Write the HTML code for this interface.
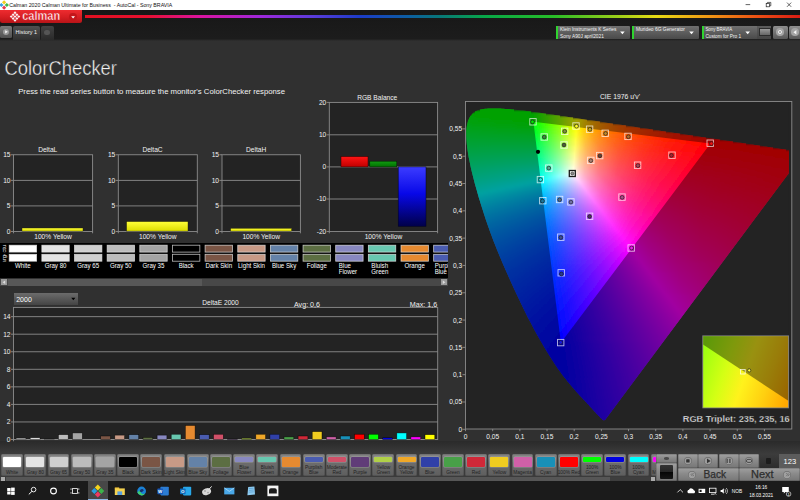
<!DOCTYPE html>
<html lang="en"><head><meta charset="utf-8"><title>Calman 2020 Calman Ultimate for Business - AutoCal - Sony BRAVIA</title>
<style>
html,body{margin:0;padding:0}
body{width:800px;height:500px;overflow:hidden;background:#303030;font-family:"Liberation Sans",sans-serif;position:relative;color:#fff}
.a{position:absolute}
.t{position:absolute;white-space:nowrap;line-height:1}
svg{position:absolute;left:0;top:0}
svg text{font-family:"Liberation Sans",sans-serif}
</style></head><body>
<div class="a" style="left:0.0px;top:0.0px;width:800.0px;height:10.1px;background:#fff;"></div>
<div class="a" style="left:0.0px;top:10.1px;width:800.0px;height:30.6px;background:linear-gradient(#161616,#1a1a1a 50%,#1c1c1c 93%,#303030);"></div>
<div class="a" style="left:0.0px;top:10.1px;width:82.0px;height:13.4px;background:linear-gradient(#ee2c30,#d61e22 55%,#b81418);border-radius:0 0 2.5px 2.5px"></div>
<div class="a" style="left:69.4px;top:13.2px;width:7.4px;height:7.4px;background:#c4161a;border-radius:50%"></div>
<div class="a" style="left:85px;top:15.2px;width:715px;height:2.4px;background:linear-gradient(90deg,#e01020 0%,#e81030 8.7%,#dc14a0 16%,#a028dc 24.5%,#5a3cdc 32%,#1c3cc8 38.5%,#0c60a0 45.5%,#087878 49.7%,#08a848 56%,#28be28 65.5%,#a0d018 74.8%,#e8dc14 79.9%,#f09614 87.4%,#ec4c14 94.4%,#dc1c14 100%);filter:blur(0.35px)"></div>
<div class="a" style="left:0.0px;top:25.5px;width:12.0px;height:12.6px;background:linear-gradient(#7a7a7a,#505050);border-radius:1.5px"></div>
<div class="a" style="left:2.8px;top:28.6px;width:6.4px;height:6.4px;background:#9a9a9a;border-radius:50%"></div>
<div class="a" style="left:13.0px;top:25.5px;width:27.2px;height:14.0px;background:linear-gradient(#505050,#303030);border-radius:2px 2px 0 0"></div>
<div class="a" style="left:40.6px;top:25.5px;width:13.2px;height:14.0px;background:linear-gradient(#424242,#2a2a2a);border-radius:2px 2px 0 0"></div>
<div class="a" style="left:44.4px;top:30.0px;width:5.4px;height:5.4px;background:#555;border-radius:50%"></div>
<div class="a" style="left:556.2px;top:25.7px;width:73.5px;height:13.0px;background:linear-gradient(#707070,#4a4a4a);border-radius:1px"></div>
<div class="a" style="left:556.2px;top:25.7px;width:2.2px;height:13.0px;background:#2fd32f;"></div>
<div class="a" style="left:632.0px;top:25.7px;width:66.5px;height:13.0px;background:linear-gradient(#707070,#4a4a4a);border-radius:1px"></div>
<div class="a" style="left:632.0px;top:25.7px;width:2.2px;height:13.0px;background:#2fd32f;"></div>
<div class="a" style="left:701.5px;top:25.7px;width:69.5px;height:13.0px;background:linear-gradient(#707070,#4a4a4a);border-radius:1px"></div>
<div class="a" style="left:701.5px;top:25.7px;width:2.2px;height:13.0px;background:#2fd32f;"></div>
<div class="a" style="left:757.0px;top:25.7px;width:14.0px;height:13.0px;background:linear-gradient(#5c5c5c,#454545);"></div>
<div class="a" style="left:759.4px;top:28.4px;width:9.4px;height:6.0px;background:linear-gradient(#9a9a9a,#666);border:0.5px solid #2c2c2c"></div>
<div class="a" style="left:773.0px;top:25.7px;width:14.6px;height:13.0px;background:linear-gradient(#8e8e8e,#585858);border-radius:1.5px"></div>
<div class="a" style="left:776.4px;top:28.4px;width:7.6px;height:7.6px;background:#a4a4a4;border-radius:50%"></div>
<div class="a" style="left:778.4px;top:30.4px;width:1.6px;height:1.6px;background:transparent;border:1.1px solid #f4f4f4;border-radius:50%"></div>
<div class="a" style="left:789.0px;top:25.7px;width:12.0px;height:13.0px;background:linear-gradient(#8e8e8e,#585858);border-radius:1.5px"></div>
<div class="a" style="left:791.0px;top:28.4px;width:7.6px;height:7.6px;background:#a4a4a4;border-radius:50%"></div>
<div class="a" style="left:0.0px;top:243.2px;width:448.0px;height:34.5px;background:#000;"></div>
<div class="a" style="left:0.0px;top:278.8px;width:448.0px;height:7.0px;background:#484848;"></div>
<div class="a" style="left:8.0px;top:278.8px;width:194.0px;height:7.0px;background:#585858;"></div>
<div class="a" style="left:1.0px;top:279.4px;width:6.0px;height:5.8px;background:#9a9a9a;"></div>
<div class="a" style="left:440.6px;top:279.4px;width:6.6px;height:5.8px;background:#9a9a9a;"></div>
<div class="a" style="left:14.0px;top:293.4px;width:64.0px;height:11.3px;background:linear-gradient(#6c6c6c,#444);"></div>
<div class="a" style="left:0.0px;top:441.0px;width:800.0px;height:41.0px;background:linear-gradient(#2a2a2a,#3b3b3b 30%,#3b3b3b);"></div>
<div class="a" style="left:0;top:454.4px;width:655.6px;height:22px;overflow:hidden">
<div class="a" style="left:1.2px;top:0;width:21.8px;height:21.6px;background:linear-gradient(#858585,#6c6c6c 40%,#5e5e5e);border-radius:1.5px;box-shadow:inset 0 0 0 0.5px rgba(0,0,0,.25)"></div>
<div class="a" style="left:3.1px;top:2.5px;width:18px;height:10.2px;background:#ffffff;border-radius:1px;box-shadow:0 0 0 0.6px rgba(255,255,255,.3)"></div>
<div class="a" style="left:24.4px;top:0;width:21.8px;height:21.6px;background:linear-gradient(#858585,#6c6c6c 40%,#5e5e5e);border-radius:1.5px;box-shadow:inset 0 0 0 0.5px rgba(0,0,0,.25)"></div>
<div class="a" style="left:26.3px;top:2.5px;width:18px;height:10.2px;background:#e4e4e4;border-radius:1px;box-shadow:0 0 0 0.6px rgba(255,255,255,.3)"></div>
<div class="a" style="left:47.6px;top:0;width:21.8px;height:21.6px;background:linear-gradient(#858585,#6c6c6c 40%,#5e5e5e);border-radius:1.5px;box-shadow:inset 0 0 0 0.5px rgba(0,0,0,.25)"></div>
<div class="a" style="left:49.5px;top:2.5px;width:18px;height:10.2px;background:#d0d0d0;border-radius:1px;box-shadow:0 0 0 0.6px rgba(255,255,255,.3)"></div>
<div class="a" style="left:70.8px;top:0;width:21.8px;height:21.6px;background:linear-gradient(#858585,#6c6c6c 40%,#5e5e5e);border-radius:1.5px;box-shadow:inset 0 0 0 0.5px rgba(0,0,0,.25)"></div>
<div class="a" style="left:72.7px;top:2.5px;width:18px;height:10.2px;background:#bcbcbc;border-radius:1px;box-shadow:0 0 0 0.6px rgba(255,255,255,.3)"></div>
<div class="a" style="left:94.0px;top:0;width:21.8px;height:21.6px;background:linear-gradient(#858585,#6c6c6c 40%,#5e5e5e);border-radius:1.5px;box-shadow:inset 0 0 0 0.5px rgba(0,0,0,.25)"></div>
<div class="a" style="left:95.9px;top:2.5px;width:18px;height:10.2px;background:#a4a4a4;border-radius:1px;box-shadow:0 0 0 0.6px rgba(255,255,255,.3)"></div>
<div class="a" style="left:117.2px;top:0;width:21.8px;height:21.6px;background:linear-gradient(#858585,#6c6c6c 40%,#5e5e5e);border-radius:1.5px;box-shadow:inset 0 0 0 0.5px rgba(0,0,0,.25)"></div>
<div class="a" style="left:119.1px;top:2.5px;width:18px;height:10.2px;background:#000000;border-radius:1px;box-shadow:0 0 0 0.6px rgba(255,255,255,.3)"></div>
<div class="a" style="left:140.4px;top:0;width:21.8px;height:21.6px;background:linear-gradient(#858585,#6c6c6c 40%,#5e5e5e);border-radius:1.5px;box-shadow:inset 0 0 0 0.5px rgba(0,0,0,.25)"></div>
<div class="a" style="left:142.3px;top:2.5px;width:18px;height:10.2px;background:#7a5545;border-radius:1px;box-shadow:0 0 0 0.6px rgba(255,255,255,.3)"></div>
<div class="a" style="left:163.6px;top:0;width:21.8px;height:21.6px;background:linear-gradient(#858585,#6c6c6c 40%,#5e5e5e);border-radius:1.5px;box-shadow:inset 0 0 0 0.5px rgba(0,0,0,.25)"></div>
<div class="a" style="left:165.5px;top:2.5px;width:18px;height:10.2px;background:#c89a86;border-radius:1px;box-shadow:0 0 0 0.6px rgba(255,255,255,.3)"></div>
<div class="a" style="left:186.8px;top:0;width:21.8px;height:21.6px;background:linear-gradient(#858585,#6c6c6c 40%,#5e5e5e);border-radius:1.5px;box-shadow:inset 0 0 0 0.5px rgba(0,0,0,.25)"></div>
<div class="a" style="left:188.7px;top:2.5px;width:18px;height:10.2px;background:#6482a8;border-radius:1px;box-shadow:0 0 0 0.6px rgba(255,255,255,.3)"></div>
<div class="a" style="left:210.0px;top:0;width:21.8px;height:21.6px;background:linear-gradient(#858585,#6c6c6c 40%,#5e5e5e);border-radius:1.5px;box-shadow:inset 0 0 0 0.5px rgba(0,0,0,.25)"></div>
<div class="a" style="left:211.9px;top:2.5px;width:18px;height:10.2px;background:#5c6e42;border-radius:1px;box-shadow:0 0 0 0.6px rgba(255,255,255,.3)"></div>
<div class="a" style="left:233.2px;top:0;width:21.8px;height:21.6px;background:linear-gradient(#858585,#6c6c6c 40%,#5e5e5e);border-radius:1.5px;box-shadow:inset 0 0 0 0.5px rgba(0,0,0,.25)"></div>
<div class="a" style="left:235.1px;top:2.5px;width:18px;height:5.2px;background:#8888c0;border-radius:1px;box-shadow:0 0 0 0.6px rgba(255,255,255,.3)"></div>
<div class="a" style="left:256.4px;top:0;width:21.8px;height:21.6px;background:linear-gradient(#858585,#6c6c6c 40%,#5e5e5e);border-radius:1.5px;box-shadow:inset 0 0 0 0.5px rgba(0,0,0,.25)"></div>
<div class="a" style="left:258.3px;top:2.5px;width:18px;height:5.2px;background:#68c8b0;border-radius:1px;box-shadow:0 0 0 0.6px rgba(255,255,255,.3)"></div>
<div class="a" style="left:279.6px;top:0;width:21.8px;height:21.6px;background:linear-gradient(#858585,#6c6c6c 40%,#5e5e5e);border-radius:1.5px;box-shadow:inset 0 0 0 0.5px rgba(0,0,0,.25)"></div>
<div class="a" style="left:281.5px;top:2.5px;width:18px;height:10.2px;background:#e68a30;border-radius:1px;box-shadow:0 0 0 0.6px rgba(255,255,255,.3)"></div>
<div class="a" style="left:302.8px;top:0;width:21.8px;height:21.6px;background:linear-gradient(#858585,#6c6c6c 40%,#5e5e5e);border-radius:1.5px;box-shadow:inset 0 0 0 0.5px rgba(0,0,0,.25)"></div>
<div class="a" style="left:304.7px;top:2.5px;width:18px;height:5.2px;background:#4a5cb0;border-radius:1px;box-shadow:0 0 0 0.6px rgba(255,255,255,.3)"></div>
<div class="a" style="left:326.0px;top:0;width:21.8px;height:21.6px;background:linear-gradient(#858585,#6c6c6c 40%,#5e5e5e);border-radius:1.5px;box-shadow:inset 0 0 0 0.5px rgba(0,0,0,.25)"></div>
<div class="a" style="left:327.9px;top:2.5px;width:18px;height:5.2px;background:#d05068;border-radius:1px;box-shadow:0 0 0 0.6px rgba(255,255,255,.3)"></div>
<div class="a" style="left:349.2px;top:0;width:21.8px;height:21.6px;background:linear-gradient(#858585,#6c6c6c 40%,#5e5e5e);border-radius:1.5px;box-shadow:inset 0 0 0 0.5px rgba(0,0,0,.25)"></div>
<div class="a" style="left:351.1px;top:2.5px;width:18px;height:10.2px;background:#603c78;border-radius:1px;box-shadow:0 0 0 0.6px rgba(255,255,255,.3)"></div>
<div class="a" style="left:372.4px;top:0;width:21.8px;height:21.6px;background:linear-gradient(#858585,#6c6c6c 40%,#5e5e5e);border-radius:1.5px;box-shadow:inset 0 0 0 0.5px rgba(0,0,0,.25)"></div>
<div class="a" style="left:374.3px;top:2.5px;width:18px;height:5.2px;background:#b0d048;border-radius:1px;box-shadow:0 0 0 0.6px rgba(255,255,255,.3)"></div>
<div class="a" style="left:395.6px;top:0;width:21.8px;height:21.6px;background:linear-gradient(#858585,#6c6c6c 40%,#5e5e5e);border-radius:1.5px;box-shadow:inset 0 0 0 0.5px rgba(0,0,0,.25)"></div>
<div class="a" style="left:397.5px;top:2.5px;width:18px;height:5.2px;background:#f0a828;border-radius:1px;box-shadow:0 0 0 0.6px rgba(255,255,255,.3)"></div>
<div class="a" style="left:418.8px;top:0;width:21.8px;height:21.6px;background:linear-gradient(#858585,#6c6c6c 40%,#5e5e5e);border-radius:1.5px;box-shadow:inset 0 0 0 0.5px rgba(0,0,0,.25)"></div>
<div class="a" style="left:420.7px;top:2.5px;width:18px;height:10.2px;background:#3040a8;border-radius:1px;box-shadow:0 0 0 0.6px rgba(255,255,255,.3)"></div>
<div class="a" style="left:442.0px;top:0;width:21.8px;height:21.6px;background:linear-gradient(#858585,#6c6c6c 40%,#5e5e5e);border-radius:1.5px;box-shadow:inset 0 0 0 0.5px rgba(0,0,0,.25)"></div>
<div class="a" style="left:443.9px;top:2.5px;width:18px;height:10.2px;background:#48a048;border-radius:1px;box-shadow:0 0 0 0.6px rgba(255,255,255,.3)"></div>
<div class="a" style="left:465.2px;top:0;width:21.8px;height:21.6px;background:linear-gradient(#858585,#6c6c6c 40%,#5e5e5e);border-radius:1.5px;box-shadow:inset 0 0 0 0.5px rgba(0,0,0,.25)"></div>
<div class="a" style="left:467.1px;top:2.5px;width:18px;height:10.2px;background:#d02838;border-radius:1px;box-shadow:0 0 0 0.6px rgba(255,255,255,.3)"></div>
<div class="a" style="left:488.4px;top:0;width:21.8px;height:21.6px;background:linear-gradient(#858585,#6c6c6c 40%,#5e5e5e);border-radius:1.5px;box-shadow:inset 0 0 0 0.5px rgba(0,0,0,.25)"></div>
<div class="a" style="left:490.3px;top:2.5px;width:18px;height:10.2px;background:#f0cc20;border-radius:1px;box-shadow:0 0 0 0.6px rgba(255,255,255,.3)"></div>
<div class="a" style="left:511.6px;top:0;width:21.8px;height:21.6px;background:linear-gradient(#858585,#6c6c6c 40%,#5e5e5e);border-radius:1.5px;box-shadow:inset 0 0 0 0.5px rgba(0,0,0,.25)"></div>
<div class="a" style="left:513.5px;top:2.5px;width:18px;height:10.2px;background:#d060a8;border-radius:1px;box-shadow:0 0 0 0.6px rgba(255,255,255,.3)"></div>
<div class="a" style="left:534.8px;top:0;width:21.8px;height:21.6px;background:linear-gradient(#858585,#6c6c6c 40%,#5e5e5e);border-radius:1.5px;box-shadow:inset 0 0 0 0.5px rgba(0,0,0,.25)"></div>
<div class="a" style="left:536.7px;top:2.5px;width:18px;height:10.2px;background:#1890b8;border-radius:1px;box-shadow:0 0 0 0.6px rgba(255,255,255,.3)"></div>
<div class="a" style="left:558.0px;top:0;width:21.8px;height:21.6px;background:linear-gradient(#858585,#6c6c6c 40%,#5e5e5e);border-radius:1.5px;box-shadow:inset 0 0 0 0.5px rgba(0,0,0,.25)"></div>
<div class="a" style="left:559.9px;top:2.5px;width:18px;height:10.2px;background:#ff0000;border-radius:1px;box-shadow:0 0 0 0.6px rgba(255,255,255,.3)"></div>
<div class="a" style="left:581.2px;top:0;width:21.8px;height:21.6px;background:linear-gradient(#858585,#6c6c6c 40%,#5e5e5e);border-radius:1.5px;box-shadow:inset 0 0 0 0.5px rgba(0,0,0,.25)"></div>
<div class="a" style="left:583.1px;top:2.5px;width:18px;height:5.2px;background:#00ff00;border-radius:1px;box-shadow:0 0 0 0.6px rgba(255,255,255,.3)"></div>
<div class="a" style="left:604.4px;top:0;width:21.8px;height:21.6px;background:linear-gradient(#858585,#6c6c6c 40%,#5e5e5e);border-radius:1.5px;box-shadow:inset 0 0 0 0.5px rgba(0,0,0,.25)"></div>
<div class="a" style="left:606.3px;top:2.5px;width:18px;height:5.2px;background:#0000e0;border-radius:1px;box-shadow:0 0 0 0.6px rgba(255,255,255,.3)"></div>
<div class="a" style="left:627.6px;top:0;width:21.8px;height:21.6px;background:linear-gradient(#858585,#6c6c6c 40%,#5e5e5e);border-radius:1.5px;box-shadow:inset 0 0 0 0.5px rgba(0,0,0,.25)"></div>
<div class="a" style="left:629.5px;top:2.5px;width:18px;height:5.2px;background:#00ffff;border-radius:1px;box-shadow:0 0 0 0.6px rgba(255,255,255,.3)"></div>
<div class="a" style="left:650.8px;top:0;width:21.8px;height:21.6px;background:linear-gradient(#858585,#6c6c6c 40%,#5e5e5e);border-radius:1.5px;box-shadow:inset 0 0 0 0.5px rgba(0,0,0,.25)"></div>
<div class="a" style="left:652.7px;top:2.5px;width:18px;height:5.2px;background:#ff00ff;border-radius:1px;box-shadow:0 0 0 0.6px rgba(255,255,255,.3)"></div>
<div class="a" style="left:674.0px;top:0;width:21.8px;height:21.6px;background:linear-gradient(#858585,#6c6c6c 40%,#5e5e5e);border-radius:1.5px;box-shadow:inset 0 0 0 0.5px rgba(0,0,0,.25)"></div>
<div class="a" style="left:675.9px;top:2.5px;width:18px;height:5.2px;background:#ffff00;border-radius:1px;box-shadow:0 0 0 0.6px rgba(255,255,255,.3)"></div>
</div>
<div class="a" style="left:0.0px;top:476.6px;width:655.6px;height:4.7px;background:#3e3e3e;"></div>
<div class="a" style="left:6.0px;top:476.6px;width:604.0px;height:4.7px;background:#565656;"></div>
<div class="a" style="left:1.0px;top:477.2px;width:4.4px;height:3.6px;background:#aaa;"></div>
<div class="a" style="left:650.6px;top:477.2px;width:4.4px;height:3.6px;background:#aaa;"></div>
<div class="a" style="left:656.0px;top:454.4px;width:21.2px;height:8.2px;background:linear-gradient(#a0a0a0,#8a8a8a 45%,#767676);border-radius:1px;box-shadow:inset 0 0 0 0.5px rgba(0,0,0,.3)"></div>
<div class="a" style="left:656.0px;top:463.0px;width:21.2px;height:18.3px;background:linear-gradient(#a0a0a0,#8a8a8a 45%,#767676);border-radius:1px;box-shadow:inset 0 0 0 0.5px rgba(0,0,0,.3)"></div>
<div class="a" style="left:659.8px;top:465.0px;width:13.6px;height:14.0px;background:linear-gradient(#333,#262626 48%,#060606 52%,#161616);border-radius:1px"></div>
<div class="a" style="left:663.6px;top:456.6px;width:5.6px;height:3.0px;background:#4a4a4a;border-radius:50%"></div>
<div class="a" style="left:678.0px;top:454.4px;width:19.9px;height:13.3px;background:linear-gradient(#a0a0a0,#8a8a8a 45%,#767676);border-radius:1px;box-shadow:inset 0 0 0 0.5px rgba(0,0,0,.3)"></div>
<div class="a" style="left:683.7px;top:456.8px;width:8.4px;height:8.4px;background:#9c9c9c;border-radius:50%;box-shadow:inset 0 0 0 0.7px #6a6a6a"></div>
<div class="a" style="left:698.4px;top:454.4px;width:19.9px;height:13.3px;background:linear-gradient(#a0a0a0,#8a8a8a 45%,#767676);border-radius:1px;box-shadow:inset 0 0 0 0.5px rgba(0,0,0,.3)"></div>
<div class="a" style="left:704.1px;top:456.8px;width:8.4px;height:8.4px;background:#9c9c9c;border-radius:50%;box-shadow:inset 0 0 0 0.7px #6a6a6a"></div>
<div class="a" style="left:718.8px;top:454.4px;width:19.9px;height:13.3px;background:linear-gradient(#a0a0a0,#8a8a8a 45%,#767676);border-radius:1px;box-shadow:inset 0 0 0 0.5px rgba(0,0,0,.3)"></div>
<div class="a" style="left:724.5px;top:456.8px;width:8.4px;height:8.4px;background:#9c9c9c;border-radius:50%;box-shadow:inset 0 0 0 0.7px #6a6a6a"></div>
<div class="a" style="left:739.2px;top:454.4px;width:19.9px;height:13.3px;background:linear-gradient(#a0a0a0,#8a8a8a 45%,#767676);border-radius:1px;box-shadow:inset 0 0 0 0.5px rgba(0,0,0,.3)"></div>
<div class="a" style="left:744.9px;top:456.8px;width:8.4px;height:8.4px;background:#9c9c9c;border-radius:50%;box-shadow:inset 0 0 0 0.7px #6a6a6a"></div>
<div class="a" style="left:759.6px;top:454.4px;width:19.2px;height:13.3px;background:linear-gradient(#3c3c3c,#2c2c2c);"></div>
<div class="a" style="left:765.8px;top:458.0px;width:5.0px;height:6.0px;background:#1c1c1c;border-radius:1px"></div>
<div class="a" style="left:779.2px;top:454.4px;width:20.8px;height:13.3px;background:#5c5c5c;"></div>
<div class="a" style="left:678.0px;top:468.2px;width:60.9px;height:13.1px;background:linear-gradient(#a0a0a0,#8a8a8a 45%,#767676);border-radius:1px;box-shadow:inset 0 0 0 0.5px rgba(0,0,0,.3)"></div>
<div class="a" style="left:739.4px;top:468.2px;width:60.6px;height:13.1px;background:linear-gradient(#a0a0a0,#8a8a8a 45%,#767676);border-radius:1px;box-shadow:inset 0 0 0 0.5px rgba(0,0,0,.3)"></div>
<div class="a" style="left:688.2px;top:470.6px;width:8.2px;height:8.2px;background:#a0a0a0;border-radius:50%;box-shadow:inset 0 0 0 0.7px #6e6e6e"></div>
<div class="a" style="left:782.8px;top:470.6px;width:8.2px;height:8.2px;background:#a0a0a0;border-radius:50%;box-shadow:inset 0 0 0 0.7px #6e6e6e"></div>
<div class="a" style="left:0.0px;top:481.4px;width:800.0px;height:18.6px;background:#1b1b1b;"></div>
<div class="a" style="left:87.8px;top:481.4px;width:20.6px;height:18.6px;background:#474747;"></div>
<div class="a" style="left:87.8px;top:499.2px;width:20.6px;height:0.8px;background:#8fb8e6;"></div>
<svg width="800" height="500" viewBox="0 0 800 500"><defs><linearGradient id="gy" x1="0" y1="0" x2="0" y2="1"><stop offset="0" stop-color="#ffff38"/><stop offset="1" stop-color="#dcdc00"/></linearGradient>
<linearGradient id="gr" x1="0" y1="0" x2="0" y2="1"><stop offset="0" stop-color="#ff1414"/><stop offset="1" stop-color="#c00000"/></linearGradient>
<linearGradient id="gg" x1="0" y1="0" x2="0" y2="1"><stop offset="0" stop-color="#129c12"/><stop offset="1" stop-color="#007000"/></linearGradient>
<linearGradient id="gb" x1="0" y1="0" x2="0" y2="1"><stop offset="0" stop-color="#3c3cff"/><stop offset="0.45" stop-color="#0808e8"/><stop offset="1" stop-color="#000048"/></linearGradient>
<clipPath id="cs1"><rect x="0" y="243" width="448" height="35"/></clipPath>
<clipPath id="cr1"><rect x="0" y="244.7" width="8" height="7.6"/></clipPath><clipPath id="cr2"><rect x="0" y="253.9" width="8" height="7.9"/></clipPath>
<linearGradient id="c0" gradientUnits="userSpaceOnUse" x1="480.0" x2="513.5" y1="0" y2="0"><stop offset="0" stop-color="#00ff00"/><stop offset="1" stop-color="#00ff00"/></linearGradient>
<linearGradient id="c1" gradientUnits="userSpaceOnUse" x1="474.5" x2="531.0" y1="0" y2="0"><stop offset="0" stop-color="#00ff00"/><stop offset="1" stop-color="#00ff00"/></linearGradient>
<linearGradient id="c2" gradientUnits="userSpaceOnUse" x1="472.0" x2="545.5" y1="0" y2="0"><stop offset="0" stop-color="#00ff00"/><stop offset="0.8163" stop-color="#00ff00"/><stop offset="1" stop-color="#47ff00"/></linearGradient>
<linearGradient id="c3" gradientUnits="userSpaceOnUse" x1="470.0" x2="559.5" y1="0" y2="0"><stop offset="0" stop-color="#00ff02"/><stop offset="0.6983" stop-color="#00ff00"/><stop offset="1" stop-color="#92ff00"/></linearGradient>
<linearGradient id="c4" gradientUnits="userSpaceOnUse" x1="469.0" x2="573.0" y1="0" y2="0"><stop offset="0" stop-color="#00ff09"/><stop offset="0.2067" stop-color="#00ff00"/><stop offset="0.6106" stop-color="#00ff00"/><stop offset="0.8462" stop-color="#84ff00"/><stop offset="1" stop-color="#e4ff00"/></linearGradient>
<linearGradient id="c5" gradientUnits="userSpaceOnUse" x1="468.0" x2="586.5" y1="0" y2="0"><stop offset="0" stop-color="#00ff0f"/><stop offset="0.3291" stop-color="#00ff00"/><stop offset="0.5485" stop-color="#00ff00"/><stop offset="0.7722" stop-color="#92ff00"/><stop offset="0.9198" stop-color="#ffff00"/><stop offset="1" stop-color="#ffc900"/></linearGradient>
<linearGradient id="c6" gradientUnits="userSpaceOnUse" x1="467.0" x2="599.5" y1="0" y2="0"><stop offset="0" stop-color="#00ff15"/><stop offset="0.4981" stop-color="#00ff00"/><stop offset="0.6906" stop-color="#8cff00"/><stop offset="0.8302" stop-color="#fffe00"/><stop offset="0.9057" stop-color="#ffc600"/><stop offset="1" stop-color="#ff9600"/></linearGradient>
<linearGradient id="c7" gradientUnits="userSpaceOnUse" x1="466.5" x2="613.0" y1="0" y2="0"><stop offset="0" stop-color="#00ff1b"/><stop offset="0.4573" stop-color="#00ff04"/><stop offset="0.6348" stop-color="#92ff00"/><stop offset="0.7509" stop-color="#feff00"/><stop offset="0.8055" stop-color="#ffd100"/><stop offset="0.8601" stop-color="#ffad00"/><stop offset="0.9249" stop-color="#ff8e00"/><stop offset="1" stop-color="#ff7200"/></linearGradient>
<linearGradient id="c8" gradientUnits="userSpaceOnUse" x1="466.0" x2="626.0" y1="0" y2="0"><stop offset="0" stop-color="#00ff21"/><stop offset="0.4219" stop-color="#00ff0c"/><stop offset="0.5813" stop-color="#8fff00"/><stop offset="0.6906" stop-color="#ffff00"/><stop offset="0.7469" stop-color="#ffcb00"/><stop offset="0.8156" stop-color="#ff9e00"/><stop offset="0.9" stop-color="#ff7700"/><stop offset="1" stop-color="#ff5800"/></linearGradient>
<linearGradient id="c9" gradientUnits="userSpaceOnUse" x1="466.0" x2="639.5" y1="0" y2="0"><stop offset="0" stop-color="#00ff26"/><stop offset="0.3919" stop-color="#00ff14"/><stop offset="0.5389" stop-color="#91ff08"/><stop offset="0.634" stop-color="#fcff00"/><stop offset="0.7032" stop-color="#ffbe00"/><stop offset="0.781" stop-color="#ff8d00"/><stop offset="0.879" stop-color="#ff6400"/><stop offset="1" stop-color="#ff4300"/></linearGradient>
<linearGradient id="c10" gradientUnits="userSpaceOnUse" x1="465.5" x2="653.0" y1="0" y2="0"><stop offset="0" stop-color="#00ff2c"/><stop offset="0.3653" stop-color="#00ff1c"/><stop offset="0.4987" stop-color="#8eff12"/><stop offset="0.5893" stop-color="#fdff09"/><stop offset="0.6587" stop-color="#ffb800"/><stop offset="0.7467" stop-color="#ff8100"/><stop offset="0.8587" stop-color="#ff5500"/><stop offset="1" stop-color="#ff3200"/></linearGradient>
<linearGradient id="c11" gradientUnits="userSpaceOnUse" x1="465.5" x2="666.0" y1="0" y2="0"><stop offset="0" stop-color="#00ff32"/><stop offset="0.3441" stop-color="#00ff24"/><stop offset="0.4713" stop-color="#94ff1b"/><stop offset="0.5511" stop-color="#feff14"/><stop offset="0.586" stop-color="#ffd40d"/><stop offset="0.6234" stop-color="#ffb108"/><stop offset="0.7157" stop-color="#ff7700"/><stop offset="0.8379" stop-color="#ff4900"/><stop offset="1" stop-color="#ff2500"/></linearGradient>
<linearGradient id="c12" gradientUnits="userSpaceOnUse" x1="465.5" x2="679.5" y1="0" y2="0"><stop offset="0" stop-color="#00ff37"/><stop offset="0.3224" stop-color="#00ff2b"/><stop offset="0.4369" stop-color="#8eff24"/><stop offset="0.5164" stop-color="#ffff1e"/><stop offset="0.5491" stop-color="#ffd316"/><stop offset="0.5888" stop-color="#ffac0f"/><stop offset="0.6332" stop-color="#ff8b09"/><stop offset="0.6869" stop-color="#ff6d04"/><stop offset="0.8201" stop-color="#ff3e00"/><stop offset="1" stop-color="#ff1900"/></linearGradient>
<linearGradient id="c13" gradientUnits="userSpaceOnUse" x1="465.5" x2="693.0" y1="0" y2="0"><stop offset="0" stop-color="#00ff3d"/><stop offset="0.3055" stop-color="#00ff33"/><stop offset="0.4132" stop-color="#91ff2d"/><stop offset="0.4857" stop-color="#fffe28"/><stop offset="0.5187" stop-color="#ffcf1f"/><stop offset="0.5582" stop-color="#ffa716"/><stop offset="0.6066" stop-color="#ff830f"/><stop offset="0.6615" stop-color="#ff6508"/><stop offset="0.8022" stop-color="#ff3500"/><stop offset="1" stop-color="#ff0f00"/></linearGradient>
<linearGradient id="c14" gradientUnits="userSpaceOnUse" x1="465.5" x2="706.0" y1="0" y2="0"><stop offset="0" stop-color="#00ff42"/><stop offset="0.289" stop-color="#00ff3b"/><stop offset="0.3846" stop-color="#88ff37"/><stop offset="0.4595" stop-color="#fffd32"/><stop offset="0.4927" stop-color="#ffcb27"/><stop offset="0.5343" stop-color="#ffa01c"/><stop offset="0.5821" stop-color="#ff7c14"/><stop offset="0.6383" stop-color="#ff5e0d"/><stop offset="0.7859" stop-color="#ff2d00"/><stop offset="1" stop-color="#ff0600"/></linearGradient>
<linearGradient id="c15" gradientUnits="userSpaceOnUse" x1="465.5" x2="719.5" y1="0" y2="0"><stop offset="0" stop-color="#00ff48"/><stop offset="0.2756" stop-color="#00ff42"/><stop offset="0.372" stop-color="#94ff3f"/><stop offset="0.4331" stop-color="#ffff3d"/><stop offset="0.4665" stop-color="#ffca2f"/><stop offset="0.5079" stop-color="#ff9d23"/><stop offset="0.5571" stop-color="#ff7719"/><stop offset="0.6161" stop-color="#ff5710"/><stop offset="0.689" stop-color="#ff3c09"/><stop offset="0.7776" stop-color="#ff2402"/><stop offset="1" stop-color="#ff0000"/></linearGradient>
<linearGradient id="c16" gradientUnits="userSpaceOnUse" x1="465.5" x2="733.0" y1="0" y2="0"><stop offset="0" stop-color="#00ff4e"/><stop offset="0.2617" stop-color="#00ff4a"/><stop offset="0.3495" stop-color="#8eff49"/><stop offset="0.4112" stop-color="#fffe47"/><stop offset="0.4449" stop-color="#ffc636"/><stop offset="0.4879" stop-color="#ff9628"/><stop offset="0.5383" stop-color="#ff701d"/><stop offset="0.6019" stop-color="#ff4f13"/><stop offset="0.6879" stop-color="#ff300a"/><stop offset="0.7981" stop-color="#ff1602"/><stop offset="0.9234" stop-color="#ff0000"/><stop offset="1" stop-color="#ff0000"/></linearGradient>
<linearGradient id="c17" gradientUnits="userSpaceOnUse" x1="466.0" x2="746.0" y1="0" y2="0"><stop offset="0" stop-color="#00ff53"/><stop offset="0.25" stop-color="#00ff52"/><stop offset="0.3321" stop-color="#8eff52"/><stop offset="0.3911" stop-color="#fffd51"/><stop offset="0.4268" stop-color="#ffc03d"/><stop offset="0.4696" stop-color="#ff902d"/><stop offset="0.5232" stop-color="#ff6820"/><stop offset="0.5875" stop-color="#ff4716"/><stop offset="0.7054" stop-color="#ff220a"/><stop offset="0.875" stop-color="#ff0000"/><stop offset="1" stop-color="#ff0000"/></linearGradient>
<linearGradient id="c18" gradientUnits="userSpaceOnUse" x1="466.0" x2="759.5" y1="0" y2="0"><stop offset="0" stop-color="#00ff59"/><stop offset="0.2385" stop-color="#00ff5a"/><stop offset="0.3135" stop-color="#87ff5b"/><stop offset="0.3731" stop-color="#fffc5a"/><stop offset="0.4072" stop-color="#ffbf45"/><stop offset="0.4514" stop-color="#ff8c33"/><stop offset="0.506" stop-color="#ff6224"/><stop offset="0.5758" stop-color="#ff4018"/><stop offset="0.6797" stop-color="#ff1f0d"/><stop offset="0.8296" stop-color="#ff0002"/><stop offset="1" stop-color="#ff0000"/></linearGradient>
<linearGradient id="c19" gradientUnits="userSpaceOnUse" x1="466.0" x2="772.5" y1="0" y2="0"><stop offset="0" stop-color="#00ff5f"/><stop offset="0.23" stop-color="#00ff62"/><stop offset="0.3067" stop-color="#94ff64"/><stop offset="0.3556" stop-color="#ffff66"/><stop offset="0.3899" stop-color="#ffbe4d"/><stop offset="0.4339" stop-color="#ff8939"/><stop offset="0.4894" stop-color="#ff5e28"/><stop offset="0.5612" stop-color="#ff3b1b"/><stop offset="0.6558" stop-color="#ff1d10"/><stop offset="0.7896" stop-color="#ff0005"/><stop offset="1" stop-color="#ff0000"/></linearGradient>
<linearGradient id="c20" gradientUnits="userSpaceOnUse" x1="466.5" x2="786.0" y1="0" y2="0"><stop offset="0" stop-color="#00ff65"/><stop offset="0.2191" stop-color="#00ff6a"/><stop offset="0.2879" stop-color="#8aff6e"/><stop offset="0.3396" stop-color="#fffd70"/><stop offset="0.374" stop-color="#ffba54"/><stop offset="0.4194" stop-color="#ff833d"/><stop offset="0.4757" stop-color="#ff582b"/><stop offset="0.5493" stop-color="#ff351d"/><stop offset="0.6322" stop-color="#ff1b12"/><stop offset="0.7512" stop-color="#ff0008"/><stop offset="1" stop-color="#ff0000"/></linearGradient>
<linearGradient id="c21" gradientUnits="userSpaceOnUse" x1="466.5" x2="791.8" y1="0" y2="0"><stop offset="0" stop-color="#00ff6a"/><stop offset="0.2167" stop-color="#00ff73"/><stop offset="0.2844" stop-color="#8dff77"/><stop offset="0.3335" stop-color="#fffc7a"/><stop offset="0.3504" stop-color="#ffd769"/><stop offset="0.3689" stop-color="#ffb65b"/><stop offset="0.4135" stop-color="#ff8043"/><stop offset="0.4703" stop-color="#ff552f"/><stop offset="0.5441" stop-color="#ff3220"/><stop offset="0.6225" stop-color="#ff1915"/><stop offset="0.7332" stop-color="#ff000b"/><stop offset="1" stop-color="#ff0000"/></linearGradient>
<linearGradient id="c22" gradientUnits="userSpaceOnUse" x1="467.0" x2="791.8" y1="0" y2="0"><stop offset="0" stop-color="#00ff70"/><stop offset="0.2155" stop-color="#00ff7b"/><stop offset="0.2848" stop-color="#90ff81"/><stop offset="0.331" stop-color="#ffff86"/><stop offset="0.3479" stop-color="#ffd873"/><stop offset="0.3664" stop-color="#ffb864"/><stop offset="0.411" stop-color="#ff8049"/><stop offset="0.468" stop-color="#ff5535"/><stop offset="0.5419" stop-color="#ff3224"/><stop offset="0.7281" stop-color="#ff000e"/><stop offset="1" stop-color="#ff0000"/></linearGradient>
<linearGradient id="c23" gradientUnits="userSpaceOnUse" x1="467.5" x2="791.8" y1="0" y2="0"><stop offset="0" stop-color="#00ff76"/><stop offset="0.2158" stop-color="#00ff84"/><stop offset="0.2837" stop-color="#90ff8b"/><stop offset="0.3299" stop-color="#fffe90"/><stop offset="0.3454" stop-color="#ffda7e"/><stop offset="0.3639" stop-color="#ffb96d"/><stop offset="0.4086" stop-color="#ff8150"/><stop offset="0.4672" stop-color="#ff543a"/><stop offset="0.5412" stop-color="#ff3128"/><stop offset="0.7231" stop-color="#ff0012"/><stop offset="1" stop-color="#ff0001"/></linearGradient>
<linearGradient id="c24" gradientUnits="userSpaceOnUse" x1="467.5" x2="791.8" y1="0" y2="0"><stop offset="0" stop-color="#00ff7c"/><stop offset="0.2158" stop-color="#00ff8c"/><stop offset="0.2806" stop-color="#89ff94"/><stop offset="0.3299" stop-color="#fffd9b"/><stop offset="0.3454" stop-color="#ffd987"/><stop offset="0.3639" stop-color="#ffb775"/><stop offset="0.4086" stop-color="#ff7f57"/><stop offset="0.4672" stop-color="#ff533f"/><stop offset="0.5412" stop-color="#ff302c"/><stop offset="0.7185" stop-color="#ff0015"/><stop offset="1" stop-color="#ff0003"/></linearGradient>
<linearGradient id="c25" gradientUnits="userSpaceOnUse" x1="468.0" x2="791.8" y1="0" y2="0"><stop offset="0" stop-color="#00ff82"/><stop offset="0.2162" stop-color="#00ff95"/><stop offset="0.281" stop-color="#8dff9e"/><stop offset="0.3289" stop-color="#fffca5"/><stop offset="0.3443" stop-color="#ffd890"/><stop offset="0.3629" stop-color="#ffb67d"/><stop offset="0.4077" stop-color="#ff7e5d"/><stop offset="0.4663" stop-color="#ff5243"/><stop offset="0.5405" stop-color="#ff2f30"/><stop offset="0.7134" stop-color="#ff0018"/><stop offset="1" stop-color="#ff0005"/></linearGradient>
<linearGradient id="c26" gradientUnits="userSpaceOnUse" x1="468.5" x2="791.8" y1="0" y2="0"><stop offset="0" stop-color="#00ff89"/><stop offset="0.215" stop-color="#00ff9e"/><stop offset="0.2799" stop-color="#8cffa9"/><stop offset="0.3263" stop-color="#fffeb2"/><stop offset="0.3418" stop-color="#ffda9b"/><stop offset="0.3603" stop-color="#ffb786"/><stop offset="0.4052" stop-color="#ff7e64"/><stop offset="0.4624" stop-color="#ff5249"/><stop offset="0.5382" stop-color="#ff2e34"/><stop offset="0.7083" stop-color="#ff001b"/><stop offset="1" stop-color="#ff0007"/></linearGradient>
<linearGradient id="c27" gradientUnits="userSpaceOnUse" x1="469.0" x2="791.8" y1="0" y2="0"><stop offset="0" stop-color="#00ff8f"/><stop offset="0.2153" stop-color="#00ffa7"/><stop offset="0.2804" stop-color="#90ffb3"/><stop offset="0.3253" stop-color="#fffdbd"/><stop offset="0.3408" stop-color="#ffd8a5"/><stop offset="0.3594" stop-color="#ffb68f"/><stop offset="0.4043" stop-color="#ff7d6a"/><stop offset="0.4616" stop-color="#ff514e"/><stop offset="0.5375" stop-color="#ff2d38"/><stop offset="0.7032" stop-color="#ff001e"/><stop offset="1" stop-color="#ff0009"/></linearGradient>
<linearGradient id="c28" gradientUnits="userSpaceOnUse" x1="469.0" x2="791.8" y1="0" y2="0"><stop offset="0" stop-color="#00ff95"/><stop offset="0.2153" stop-color="#00ffb0"/><stop offset="0.2773" stop-color="#89ffbd"/><stop offset="0.3253" stop-color="#fffcc8"/><stop offset="0.3408" stop-color="#ffd7ae"/><stop offset="0.3594" stop-color="#ffb597"/><stop offset="0.4043" stop-color="#ff7c71"/><stop offset="0.4616" stop-color="#ff5053"/><stop offset="0.5375" stop-color="#ff2c3c"/><stop offset="0.6986" stop-color="#ff0021"/><stop offset="1" stop-color="#ff000b"/></linearGradient>
<linearGradient id="c29" gradientUnits="userSpaceOnUse" x1="469.5" x2="791.8" y1="0" y2="0"><stop offset="0" stop-color="#00ff9c"/><stop offset="0.2156" stop-color="#00ffba"/><stop offset="0.2808" stop-color="#93ffc9"/><stop offset="0.3227" stop-color="#ffffd6"/><stop offset="0.3382" stop-color="#ffd9ba"/><stop offset="0.3568" stop-color="#ffb6a1"/><stop offset="0.4018" stop-color="#ff7c78"/><stop offset="0.4592" stop-color="#ff5059"/><stop offset="0.5337" stop-color="#ff2c40"/><stop offset="0.6935" stop-color="#ff0024"/><stop offset="1" stop-color="#ff000d"/></linearGradient>
<linearGradient id="c30" gradientUnits="userSpaceOnUse" x1="470.0" x2="791.8" y1="0" y2="0"><stop offset="0" stop-color="#00ffa2"/><stop offset="0.2144" stop-color="#00ffc3"/><stop offset="0.2766" stop-color="#8cffd3"/><stop offset="0.3216" stop-color="#fffee1"/><stop offset="0.3372" stop-color="#ffd8c4"/><stop offset="0.3558" stop-color="#ffb4a9"/><stop offset="0.3993" stop-color="#ff7c7f"/><stop offset="0.4568" stop-color="#ff4f5e"/><stop offset="0.5329" stop-color="#ff2b44"/><stop offset="0.6883" stop-color="#ff0027"/><stop offset="1" stop-color="#ff000f"/></linearGradient>
<linearGradient id="c31" gradientUnits="userSpaceOnUse" x1="470.5" x2="791.8" y1="0" y2="0"><stop offset="0" stop-color="#00ffa9"/><stop offset="0.2148" stop-color="#00ffcd"/><stop offset="0.277" stop-color="#8fffdf"/><stop offset="0.3206" stop-color="#fffdec"/><stop offset="0.3361" stop-color="#ffd6ce"/><stop offset="0.3548" stop-color="#ffb3b2"/><stop offset="0.3984" stop-color="#ff7b86"/><stop offset="0.456" stop-color="#ff4e63"/><stop offset="0.5322" stop-color="#ff2a48"/><stop offset="0.6832" stop-color="#ff002b"/><stop offset="1" stop-color="#ff0010"/></linearGradient>
<linearGradient id="c32" gradientUnits="userSpaceOnUse" x1="471.0" x2="791.0" y1="0" y2="0"><stop offset="0" stop-color="#00ffaf"/><stop offset="0.2141" stop-color="#00ffd7"/><stop offset="0.2719" stop-color="#84ffe8"/><stop offset="0.3203" stop-color="#fffbf7"/><stop offset="0.3359" stop-color="#ffd5d8"/><stop offset="0.3547" stop-color="#ffb1ba"/><stop offset="0.3984" stop-color="#ff7a8c"/><stop offset="0.4562" stop-color="#ff4d68"/><stop offset="0.5328" stop-color="#ff294c"/><stop offset="0.6797" stop-color="#ff002e"/><stop offset="1" stop-color="#ff0012"/></linearGradient>
<linearGradient id="c33" gradientUnits="userSpaceOnUse" x1="471.5" x2="789.5" y1="0" y2="0"><stop offset="0" stop-color="#00ffb6"/><stop offset="0.2154" stop-color="#00ffe1"/><stop offset="0.3003" stop-color="#cbffff"/><stop offset="0.3223" stop-color="#fff5ff"/><stop offset="0.3381" stop-color="#ffd0df"/><stop offset="0.3569" stop-color="#ffadc1"/><stop offset="0.4009" stop-color="#ff7792"/><stop offset="0.4591" stop-color="#ff4b6c"/><stop offset="0.5362" stop-color="#ff274f"/><stop offset="0.6777" stop-color="#ff0031"/><stop offset="1" stop-color="#ff0014"/></linearGradient>
<linearGradient id="c34" gradientUnits="userSpaceOnUse" x1="472.0" x2="788.0" y1="0" y2="0"><stop offset="0" stop-color="#00ffbd"/><stop offset="0.1171" stop-color="#00ffd2"/><stop offset="0.2152" stop-color="#00ffeb"/><stop offset="0.2722" stop-color="#83ffff"/><stop offset="0.3291" stop-color="#ffe4fc"/><stop offset="0.3465" stop-color="#ffbfdb"/><stop offset="0.3655" stop-color="#ffa0bf"/><stop offset="0.4114" stop-color="#ff6d90"/><stop offset="0.4715" stop-color="#ff436c"/><stop offset="0.5491" stop-color="#ff2250"/><stop offset="0.6772" stop-color="#ff0035"/><stop offset="1" stop-color="#ff0016"/></linearGradient>
<linearGradient id="c35" gradientUnits="userSpaceOnUse" x1="472.5" x2="786.5" y1="0" y2="0"><stop offset="0" stop-color="#00ffc4"/><stop offset="0.1178" stop-color="#00ffdb"/><stop offset="0.2166" stop-color="#00fff6"/><stop offset="0.2436" stop-color="#40feff"/><stop offset="0.3344" stop-color="#ffd8fc"/><stop offset="0.3519" stop-color="#ffb5dc"/><stop offset="0.371" stop-color="#ff98c0"/><stop offset="0.4188" stop-color="#ff6692"/><stop offset="0.4793" stop-color="#ff3f6e"/><stop offset="0.5589" stop-color="#ff1f51"/><stop offset="0.6752" stop-color="#ff0038"/><stop offset="1" stop-color="#ff0018"/></linearGradient>
<linearGradient id="c36" gradientUnits="userSpaceOnUse" x1="473.0" x2="785.0" y1="0" y2="0"><stop offset="0" stop-color="#00ffcb"/><stop offset="0.1106" stop-color="#00ffe1"/><stop offset="0.2163" stop-color="#00feff"/><stop offset="0.2532" stop-color="#50f0ff"/><stop offset="0.3397" stop-color="#ffccfd"/><stop offset="0.3782" stop-color="#ff8ec0"/><stop offset="0.4263" stop-color="#ff5f93"/><stop offset="0.4888" stop-color="#ff3a6f"/><stop offset="0.5689" stop-color="#ff1b52"/><stop offset="0.6731" stop-color="#ff003c"/><stop offset="0.8157" stop-color="#ff0029"/><stop offset="1" stop-color="#ff001a"/></linearGradient>
<linearGradient id="c37" gradientUnits="userSpaceOnUse" x1="473.5" x2="783.5" y1="0" y2="0"><stop offset="0" stop-color="#00ffd2"/><stop offset="0.1823" stop-color="#00ffff"/><stop offset="0.2177" stop-color="#00f3ff"/><stop offset="0.25" stop-color="#46e8ff"/><stop offset="0.3452" stop-color="#ffc1fd"/><stop offset="0.3839" stop-color="#ff87c2"/><stop offset="0.4339" stop-color="#ff5994"/><stop offset="0.4968" stop-color="#ff3570"/><stop offset="0.579" stop-color="#ff1754"/><stop offset="0.671" stop-color="#ff003f"/><stop offset="0.8145" stop-color="#ff002c"/><stop offset="1" stop-color="#ff001c"/></linearGradient>
<linearGradient id="c38" gradientUnits="userSpaceOnUse" x1="474.0" x2="782.0" y1="0" y2="0"><stop offset="0" stop-color="#00ffda"/><stop offset="0.1526" stop-color="#00ffff"/><stop offset="0.2175" stop-color="#00eaff"/><stop offset="0.3506" stop-color="#ffb6fd"/><stop offset="0.3896" stop-color="#ff80c4"/><stop offset="0.4416" stop-color="#ff5395"/><stop offset="0.5065" stop-color="#ff3171"/><stop offset="0.5909" stop-color="#ff1454"/><stop offset="0.6688" stop-color="#ff0043"/><stop offset="0.8117" stop-color="#ff002e"/><stop offset="1" stop-color="#ff001e"/></linearGradient>
<linearGradient id="c39" gradientUnits="userSpaceOnUse" x1="474.5" x2="780.5" y1="0" y2="0"><stop offset="0" stop-color="#00ffe1"/><stop offset="0.1209" stop-color="#00ffff"/><stop offset="0.219" stop-color="#00e0ff"/><stop offset="0.2533" stop-color="#45d4ff"/><stop offset="0.3562" stop-color="#ffacfe"/><stop offset="0.3971" stop-color="#ff78c3"/><stop offset="0.4493" stop-color="#ff4e96"/><stop offset="0.5163" stop-color="#ff2c72"/><stop offset="0.6029" stop-color="#ff1055"/><stop offset="0.6667" stop-color="#ff0047"/><stop offset="0.8105" stop-color="#ff0031"/><stop offset="1" stop-color="#ff0020"/></linearGradient>
<linearGradient id="c40" gradientUnits="userSpaceOnUse" x1="475.0" x2="779.0" y1="0" y2="0"><stop offset="0" stop-color="#00ffe9"/><stop offset="0.0905" stop-color="#00ffff"/><stop offset="0.2188" stop-color="#00d8ff"/><stop offset="0.3618" stop-color="#ffa3fe"/><stop offset="0.4046" stop-color="#ff70c3"/><stop offset="0.4589" stop-color="#ff4796"/><stop offset="0.5296" stop-color="#ff2671"/><stop offset="0.6184" stop-color="#ff0b55"/><stop offset="0.6645" stop-color="#ff004b"/><stop offset="0.8092" stop-color="#ff0034"/><stop offset="1" stop-color="#ff0022"/></linearGradient>
<linearGradient id="c41" gradientUnits="userSpaceOnUse" x1="475.5" x2="777.5" y1="0" y2="0"><stop offset="0" stop-color="#00fff1"/><stop offset="0.0596" stop-color="#00ffff"/><stop offset="0.2202" stop-color="#00cfff"/><stop offset="0.255" stop-color="#41c4ff"/><stop offset="0.3675" stop-color="#ff9afe"/><stop offset="0.3907" stop-color="#ff7ddc"/><stop offset="0.4156" stop-color="#ff65c0"/><stop offset="0.4768" stop-color="#ff3d90"/><stop offset="0.5563" stop-color="#ff1d6c"/><stop offset="0.6606" stop-color="#ff004f"/><stop offset="0.8063" stop-color="#ff0037"/><stop offset="1" stop-color="#ff0024"/></linearGradient>
<linearGradient id="c42" gradientUnits="userSpaceOnUse" x1="476.5" x2="776.0" y1="0" y2="0"><stop offset="0" stop-color="#00fff9"/><stop offset="0.025" stop-color="#00ffff"/><stop offset="0.2187" stop-color="#00c8ff"/><stop offset="0.3723" stop-color="#ff92fe"/><stop offset="0.419" stop-color="#ff61c3"/><stop offset="0.4791" stop-color="#ff3b94"/><stop offset="0.5576" stop-color="#ff1b70"/><stop offset="0.6578" stop-color="#ff0053"/><stop offset="0.8047" stop-color="#ff003a"/><stop offset="1" stop-color="#ff0027"/></linearGradient>
<linearGradient id="c43" gradientUnits="userSpaceOnUse" x1="477.0" x2="774.5" y1="0" y2="0"><stop offset="0" stop-color="#00fdff"/><stop offset="0.2202" stop-color="#00c0ff"/><stop offset="0.2571" stop-color="#40b4ff"/><stop offset="0.3782" stop-color="#ff89ff"/><stop offset="0.4134" stop-color="#ff65d0"/><stop offset="0.4571" stop-color="#ff46a9"/><stop offset="0.5109" stop-color="#ff2c88"/><stop offset="0.5748" stop-color="#ff166e"/><stop offset="0.6571" stop-color="#ff0057"/><stop offset="0.805" stop-color="#ff003d"/><stop offset="1" stop-color="#ff0029"/></linearGradient>
<linearGradient id="c44" gradientUnits="userSpaceOnUse" x1="477.5" x2="773.0" y1="0" y2="0"><stop offset="0" stop-color="#00f5ff"/><stop offset="0.22" stop-color="#00b9ff"/><stop offset="0.3841" stop-color="#ff82ff"/><stop offset="0.4196" stop-color="#ff5fd1"/><stop offset="0.4636" stop-color="#ff42ab"/><stop offset="0.5161" stop-color="#ff298b"/><stop offset="0.5804" stop-color="#ff1370"/><stop offset="0.6548" stop-color="#ff005b"/><stop offset="0.8037" stop-color="#ff0040"/><stop offset="1" stop-color="#ff002b"/></linearGradient>
<linearGradient id="c45" gradientUnits="userSpaceOnUse" x1="478.0" x2="771.5" y1="0" y2="0"><stop offset="0" stop-color="#00eeff"/><stop offset="0.2215" stop-color="#00b3ff"/><stop offset="0.2589" stop-color="#3da7ff"/><stop offset="0.3901" stop-color="#ff7aff"/><stop offset="0.4259" stop-color="#ff5ad3"/><stop offset="0.4702" stop-color="#ff3eac"/><stop offset="0.523" stop-color="#ff268d"/><stop offset="0.5877" stop-color="#ff1172"/><stop offset="0.6525" stop-color="#ff005f"/><stop offset="0.8024" stop-color="#ff0043"/><stop offset="1" stop-color="#ff002d"/></linearGradient>
<linearGradient id="c46" gradientUnits="userSpaceOnUse" x1="478.5" x2="770.0" y1="0" y2="0"><stop offset="0" stop-color="#00e7ff"/><stop offset="0.2213" stop-color="#00acff"/><stop offset="0.3962" stop-color="#ff73ff"/><stop offset="0.434" stop-color="#ff53d2"/><stop offset="0.4768" stop-color="#ff3aae"/><stop offset="0.53" stop-color="#ff238f"/><stop offset="0.5935" stop-color="#ff0f75"/><stop offset="0.6501" stop-color="#ff0064"/><stop offset="0.7993" stop-color="#ff0046"/><stop offset="1" stop-color="#ff002f"/></linearGradient>
<linearGradient id="c47" gradientUnits="userSpaceOnUse" x1="479.5" x2="768.5" y1="0" y2="0"><stop offset="0" stop-color="#00e0ff"/><stop offset="0.2215" stop-color="#00a6ff"/><stop offset="0.2612" stop-color="#3d9aff"/><stop offset="0.4014" stop-color="#ff6dff"/><stop offset="0.4394" stop-color="#ff4ed3"/><stop offset="0.4827" stop-color="#ff36b0"/><stop offset="0.5363" stop-color="#ff1f90"/><stop offset="0.5986" stop-color="#ff0c77"/><stop offset="0.6471" stop-color="#ff0068"/><stop offset="0.7647" stop-color="#ff004f"/><stop offset="1" stop-color="#ff0031"/></linearGradient>
<linearGradient id="c48" gradientUnits="userSpaceOnUse" x1="480.0" x2="767.0" y1="0" y2="0"><stop offset="0" stop-color="#00d9ff"/><stop offset="0.2213" stop-color="#00a1ff"/><stop offset="0.2718" stop-color="#4992ff"/><stop offset="0.4094" stop-color="#ff65fd"/><stop offset="0.446" stop-color="#ff49d4"/><stop offset="0.4913" stop-color="#ff31b0"/><stop offset="0.5436" stop-color="#ff1c92"/><stop offset="0.6063" stop-color="#ff0a79"/><stop offset="0.6446" stop-color="#ff006d"/><stop offset="0.77" stop-color="#ff0051"/><stop offset="1" stop-color="#ff0034"/></linearGradient>
<linearGradient id="c49" gradientUnits="userSpaceOnUse" x1="480.5" x2="765.5" y1="0" y2="0"><stop offset="0" stop-color="#00d3ff"/><stop offset="0.2228" stop-color="#009bff"/><stop offset="0.2702" stop-color="#448dff"/><stop offset="0.4158" stop-color="#ff5ffd"/><stop offset="0.4526" stop-color="#ff45d5"/><stop offset="0.4982" stop-color="#ff2db1"/><stop offset="0.5509" stop-color="#ff1994"/><stop offset="0.6123" stop-color="#ff087b"/><stop offset="0.6421" stop-color="#ff0071"/><stop offset="0.7737" stop-color="#ff0053"/><stop offset="1" stop-color="#ff0036"/></linearGradient>
<linearGradient id="c50" gradientUnits="userSpaceOnUse" x1="481.0" x2="764.0" y1="0" y2="0"><stop offset="0" stop-color="#00cdff"/><stop offset="0.2226" stop-color="#0096ff"/><stop offset="0.2756" stop-color="#4887ff"/><stop offset="0.4223" stop-color="#ff59fe"/><stop offset="0.4611" stop-color="#ff3fd4"/><stop offset="0.5053" stop-color="#ff2ab3"/><stop offset="0.5583" stop-color="#ff1695"/><stop offset="0.6201" stop-color="#ff057d"/><stop offset="0.6396" stop-color="#ff0076"/><stop offset="0.7792" stop-color="#ff0055"/><stop offset="1" stop-color="#ff0038"/></linearGradient>
<linearGradient id="c51" gradientUnits="userSpaceOnUse" x1="481.5" x2="762.5" y1="0" y2="0"><stop offset="0" stop-color="#00c7ff"/><stop offset="0.2242" stop-color="#0091ff"/><stop offset="0.274" stop-color="#4383ff"/><stop offset="0.4288" stop-color="#ff53fe"/><stop offset="0.468" stop-color="#ff3bd5"/><stop offset="0.5125" stop-color="#ff26b4"/><stop offset="0.5641" stop-color="#ff1498"/><stop offset="0.6263" stop-color="#ff037f"/><stop offset="0.7829" stop-color="#ff0058"/><stop offset="1" stop-color="#ff003b"/></linearGradient>
<linearGradient id="c52" gradientUnits="userSpaceOnUse" x1="482.5" x2="761.0" y1="0" y2="0"><stop offset="0" stop-color="#00c1ff"/><stop offset="0.2226" stop-color="#008cff"/><stop offset="0.2765" stop-color="#457dff"/><stop offset="0.4345" stop-color="#ff4efe"/><stop offset="0.4722" stop-color="#ff37d8"/><stop offset="0.5171" stop-color="#ff23b6"/><stop offset="0.5691" stop-color="#ff129a"/><stop offset="0.6302" stop-color="#ff0182"/><stop offset="0.7864" stop-color="#ff005a"/><stop offset="1" stop-color="#ff003d"/></linearGradient>
<linearGradient id="c53" gradientUnits="userSpaceOnUse" x1="483.0" x2="759.5" y1="0" y2="0"><stop offset="0" stop-color="#00bbff"/><stop offset="0.2242" stop-color="#0087ff"/><stop offset="0.2749" stop-color="#407aff"/><stop offset="0.4412" stop-color="#ff48fe"/><stop offset="0.4792" stop-color="#ff33d9"/><stop offset="0.5244" stop-color="#ff20b8"/><stop offset="0.6365" stop-color="#ff0084"/><stop offset="0.7902" stop-color="#ff005d"/><stop offset="1" stop-color="#ff003f"/></linearGradient>
<linearGradient id="c54" gradientUnits="userSpaceOnUse" x1="483.5" x2="758.0" y1="0" y2="0"><stop offset="0" stop-color="#00b6ff"/><stop offset="0.224" stop-color="#0083ff"/><stop offset="0.2787" stop-color="#4275ff"/><stop offset="0.4481" stop-color="#ff43fe"/><stop offset="0.4863" stop-color="#ff2fd9"/><stop offset="0.5301" stop-color="#ff1dba"/><stop offset="0.6266" stop-color="#ff008c"/><stop offset="0.643" stop-color="#ff0086"/><stop offset="0.7942" stop-color="#ff005f"/><stop offset="1" stop-color="#ff0042"/></linearGradient>
<linearGradient id="c55" gradientUnits="userSpaceOnUse" x1="484.5" x2="756.5" y1="0" y2="0"><stop offset="0" stop-color="#00b1ff"/><stop offset="0.2243" stop-color="#007eff"/><stop offset="0.2776" stop-color="#4071ff"/><stop offset="0.454" stop-color="#ff3eff"/><stop offset="0.4926" stop-color="#ff2bda"/><stop offset="0.5368" stop-color="#ff1abb"/><stop offset="0.6232" stop-color="#ff0091"/><stop offset="0.6489" stop-color="#ff0088"/><stop offset="0.7996" stop-color="#ff0061"/><stop offset="1" stop-color="#ff0044"/></linearGradient>
<linearGradient id="c56" gradientUnits="userSpaceOnUse" x1="485.0" x2="755.0" y1="0" y2="0"><stop offset="0" stop-color="#00acff"/><stop offset="0.2241" stop-color="#007aff"/><stop offset="0.2815" stop-color="#426cff"/><stop offset="0.4611" stop-color="#ff3aff"/><stop offset="0.5" stop-color="#ff27db"/><stop offset="0.5444" stop-color="#ff16bc"/><stop offset="0.6204" stop-color="#ff0097"/><stop offset="0.6556" stop-color="#ff008a"/><stop offset="0.8037" stop-color="#ff0064"/><stop offset="1" stop-color="#ff0047"/></linearGradient>
<linearGradient id="c57" gradientUnits="userSpaceOnUse" x1="485.5" x2="753.5" y1="0" y2="0"><stop offset="0" stop-color="#00a7ff"/><stop offset="0.2257" stop-color="#0076ff"/><stop offset="0.2799" stop-color="#3e69ff"/><stop offset="0.4683" stop-color="#ff35ff"/><stop offset="0.5075" stop-color="#ff23dc"/><stop offset="0.5522" stop-color="#ff13bd"/><stop offset="0.6175" stop-color="#ff009d"/><stop offset="0.6623" stop-color="#ff008c"/><stop offset="0.8078" stop-color="#ff0066"/><stop offset="1" stop-color="#ff0049"/></linearGradient>
<linearGradient id="c58" gradientUnits="userSpaceOnUse" x1="486.5" x2="752.0" y1="0" y2="0"><stop offset="0" stop-color="#00a2ff"/><stop offset="0.2241" stop-color="#0073ff"/><stop offset="0.2825" stop-color="#3f65ff"/><stop offset="0.4746" stop-color="#ff31ff"/><stop offset="0.5141" stop-color="#ff1fdc"/><stop offset="0.5574" stop-color="#ff11bf"/><stop offset="0.6139" stop-color="#ff00a3"/><stop offset="0.6667" stop-color="#ff008f"/><stop offset="0.8117" stop-color="#ff0069"/><stop offset="1" stop-color="#ff004c"/></linearGradient>
<linearGradient id="c59" gradientUnits="userSpaceOnUse" x1="487.0" x2="750.5" y1="0" y2="0"><stop offset="0" stop-color="#009eff"/><stop offset="0.2258" stop-color="#006fff"/><stop offset="0.2827" stop-color="#3d61ff"/><stop offset="0.482" stop-color="#ff2cff"/><stop offset="0.5218" stop-color="#ff1cdd"/><stop offset="0.5655" stop-color="#ff0dc0"/><stop offset="0.611" stop-color="#ff00a9"/><stop offset="0.6736" stop-color="#ff0091"/><stop offset="0.8159" stop-color="#ff006b"/><stop offset="1" stop-color="#ff004e"/></linearGradient>
<linearGradient id="c60" gradientUnits="userSpaceOnUse" x1="488.0" x2="749.0" y1="0" y2="0"><stop offset="0" stop-color="#0099ff"/><stop offset="0.2241" stop-color="#006bff"/><stop offset="0.2854" stop-color="#3f5dff"/><stop offset="0.4885" stop-color="#ff28ff"/><stop offset="0.5441" stop-color="#ff13d3"/><stop offset="0.6073" stop-color="#ff00b0"/><stop offset="0.6801" stop-color="#ff0092"/><stop offset="0.8199" stop-color="#ff006e"/><stop offset="1" stop-color="#ff0051"/></linearGradient>
<linearGradient id="c61" gradientUnits="userSpaceOnUse" x1="488.5" x2="747.5" y1="0" y2="0"><stop offset="0" stop-color="#0095ff"/><stop offset="0.2259" stop-color="#0068ff"/><stop offset="0.2857" stop-color="#3d5aff"/><stop offset="0.4961" stop-color="#ff24ff"/><stop offset="0.5463" stop-color="#ff11d8"/><stop offset="0.6042" stop-color="#ff00b6"/><stop offset="0.6853" stop-color="#ff0095"/><stop offset="0.8224" stop-color="#ff0071"/><stop offset="1" stop-color="#ff0054"/></linearGradient>
<linearGradient id="c62" gradientUnits="userSpaceOnUse" x1="489.0" x2="746.0" y1="0" y2="0"><stop offset="0" stop-color="#0091ff"/><stop offset="0.2257" stop-color="#0064ff"/><stop offset="0.2957" stop-color="#4455ff"/><stop offset="0.5058" stop-color="#ff1ffe"/><stop offset="0.5506" stop-color="#ff0fdb"/><stop offset="0.6012" stop-color="#ff00bd"/><stop offset="0.6926" stop-color="#ff0097"/><stop offset="0.8268" stop-color="#ff0073"/><stop offset="1" stop-color="#ff0056"/></linearGradient>
<linearGradient id="c63" gradientUnits="userSpaceOnUse" x1="490.0" x2="744.5" y1="0" y2="0"><stop offset="0" stop-color="#008dff"/><stop offset="0.2259" stop-color="#0061ff"/><stop offset="0.2947" stop-color="#4252ff"/><stop offset="0.5128" stop-color="#ff1bfe"/><stop offset="0.5972" stop-color="#ff00c4"/><stop offset="0.6994" stop-color="#ff0099"/><stop offset="0.831" stop-color="#ff0076"/><stop offset="1" stop-color="#ff0059"/></linearGradient>
<linearGradient id="c64" gradientUnits="userSpaceOnUse" x1="490.5" x2="743.0" y1="0" y2="0"><stop offset="0" stop-color="#0089ff"/><stop offset="0.2257" stop-color="#005eff"/><stop offset="0.299" stop-color="#444eff"/><stop offset="0.5208" stop-color="#ff17fe"/><stop offset="0.5941" stop-color="#ff00cc"/><stop offset="0.705" stop-color="#ff009b"/><stop offset="0.8356" stop-color="#ff0078"/><stop offset="1" stop-color="#ff005c"/></linearGradient>
<linearGradient id="c65" gradientUnits="userSpaceOnUse" x1="491.5" x2="741.5" y1="0" y2="0"><stop offset="0" stop-color="#0085ff"/><stop offset="0.226" stop-color="#005bff"/><stop offset="0.296" stop-color="#404cff"/><stop offset="0.528" stop-color="#ff14fe"/><stop offset="0.59" stop-color="#ff00d3"/><stop offset="0.712" stop-color="#ff009d"/><stop offset="0.84" stop-color="#ff007a"/><stop offset="1" stop-color="#ff005f"/></linearGradient>
<linearGradient id="c66" gradientUnits="userSpaceOnUse" x1="492.0" x2="740.0" y1="0" y2="0"><stop offset="0" stop-color="#0082ff"/><stop offset="0.2258" stop-color="#0058ff"/><stop offset="0.3004" stop-color="#4249ff"/><stop offset="0.5363" stop-color="#ff10fe"/><stop offset="0.5867" stop-color="#ff00db"/><stop offset="0.6472" stop-color="#ff00bb"/><stop offset="0.7177" stop-color="#ff00a0"/><stop offset="0.8427" stop-color="#ff007d"/><stop offset="1" stop-color="#ff0062"/></linearGradient>
<linearGradient id="c67" gradientUnits="userSpaceOnUse" x1="493.0" x2="738.5" y1="0" y2="0"><stop offset="0" stop-color="#007eff"/><stop offset="0.2261" stop-color="#0055ff"/><stop offset="0.2994" stop-color="#4046ff"/><stop offset="0.5438" stop-color="#ff0cff"/><stop offset="0.5825" stop-color="#ff00e3"/><stop offset="0.6232" stop-color="#ff00cc"/><stop offset="0.723" stop-color="#ff00a2"/><stop offset="0.8473" stop-color="#ff0080"/><stop offset="1" stop-color="#ff0064"/></linearGradient>
<linearGradient id="c68" gradientUnits="userSpaceOnUse" x1="493.5" x2="737.0" y1="0" y2="0"><stop offset="0" stop-color="#007bff"/><stop offset="0.2259" stop-color="#0052ff"/><stop offset="0.3018" stop-color="#4043ff"/><stop offset="0.5524" stop-color="#ff09ff"/><stop offset="0.5791" stop-color="#ff00ec"/><stop offset="0.6324" stop-color="#ff00cd"/><stop offset="0.731" stop-color="#ff00a4"/><stop offset="0.8522" stop-color="#ff0082"/><stop offset="1" stop-color="#ff0067"/></linearGradient>
<linearGradient id="c69" gradientUnits="userSpaceOnUse" x1="494.5" x2="735.5" y1="0" y2="0"><stop offset="0" stop-color="#0077ff"/><stop offset="0.2261" stop-color="#004fff"/><stop offset="0.3008" stop-color="#3e41ff"/><stop offset="0.5602" stop-color="#ff05ff"/><stop offset="0.639" stop-color="#ff00ce"/><stop offset="0.7365" stop-color="#ff00a6"/><stop offset="0.8548" stop-color="#ff0085"/><stop offset="1" stop-color="#ff006a"/></linearGradient>
<linearGradient id="c70" gradientUnits="userSpaceOnUse" x1="495.5" x2="734.0" y1="0" y2="0"><stop offset="0" stop-color="#0074ff"/><stop offset="0.2243" stop-color="#004dff"/><stop offset="0.304" stop-color="#3f3eff"/><stop offset="0.5681" stop-color="#ff01ff"/><stop offset="0.6457" stop-color="#ff00d0"/><stop offset="0.7421" stop-color="#ff00a9"/><stop offset="0.8595" stop-color="#ff0088"/><stop offset="1" stop-color="#ff006d"/></linearGradient>
<linearGradient id="c71" gradientUnits="userSpaceOnUse" x1="496.0" x2="732.5" y1="0" y2="0"><stop offset="0" stop-color="#0071ff"/><stop offset="0.2262" stop-color="#004aff"/><stop offset="0.3044" stop-color="#3e3cff"/><stop offset="0.5772" stop-color="#ff00ff"/><stop offset="0.6554" stop-color="#ff00d1"/><stop offset="0.7484" stop-color="#ff00ab"/><stop offset="0.8626" stop-color="#ff008b"/><stop offset="1" stop-color="#ff0070"/></linearGradient>
<linearGradient id="c72" gradientUnits="userSpaceOnUse" x1="497.0" x2="731.0" y1="0" y2="0"><stop offset="0" stop-color="#006dff"/><stop offset="0.2244" stop-color="#0048ff"/><stop offset="0.3056" stop-color="#3d39ff"/><stop offset="0.562" stop-color="#ee00ff"/><stop offset="0.5855" stop-color="#ff00ff"/><stop offset="0.6624" stop-color="#ff00d2"/><stop offset="0.7543" stop-color="#ff00ad"/><stop offset="0.8654" stop-color="#ff008e"/><stop offset="1" stop-color="#ff0074"/></linearGradient>
<linearGradient id="c73" gradientUnits="userSpaceOnUse" x1="498.0" x2="730.0" y1="0" y2="0"><stop offset="0" stop-color="#006aff"/><stop offset="0.2241" stop-color="#0045ff"/><stop offset="0.3039" stop-color="#3c37ff"/><stop offset="0.556" stop-color="#e600ff"/><stop offset="0.5927" stop-color="#ff00ff"/><stop offset="0.6703" stop-color="#ff00d3"/><stop offset="0.7608" stop-color="#ff00af"/><stop offset="0.8707" stop-color="#ff0090"/><stop offset="1" stop-color="#ff0076"/></linearGradient>
<linearGradient id="c74" gradientUnits="userSpaceOnUse" x1="498.5" x2="728.5" y1="0" y2="0"><stop offset="0" stop-color="#0067ff"/><stop offset="0.2239" stop-color="#0043ff"/><stop offset="0.3065" stop-color="#3c34ff"/><stop offset="0.5522" stop-color="#dd00ff"/><stop offset="0.6022" stop-color="#ff00ff"/><stop offset="0.6783" stop-color="#ff00d5"/><stop offset="0.7674" stop-color="#ff00b1"/><stop offset="0.8739" stop-color="#ff0093"/><stop offset="1" stop-color="#ff007a"/></linearGradient>
<linearGradient id="c75" gradientUnits="userSpaceOnUse" x1="499.5" x2="727.0" y1="0" y2="0"><stop offset="0" stop-color="#0064ff"/><stop offset="0.2242" stop-color="#0141ff"/><stop offset="0.3055" stop-color="#3a33ff"/><stop offset="0.5473" stop-color="#d500ff"/><stop offset="0.611" stop-color="#fe00ff"/><stop offset="0.6879" stop-color="#ff00d5"/><stop offset="0.7736" stop-color="#ff00b4"/><stop offset="0.8769" stop-color="#ff0096"/><stop offset="1" stop-color="#ff007d"/></linearGradient>
<linearGradient id="c76" gradientUnits="userSpaceOnUse" x1="500.5" x2="725.5" y1="0" y2="0"><stop offset="0" stop-color="#0061ff"/><stop offset="0.2222" stop-color="#003fff"/><stop offset="0.5422" stop-color="#cd00ff"/><stop offset="0.6222" stop-color="#ff00fe"/><stop offset="0.6956" stop-color="#ff00d7"/><stop offset="0.78" stop-color="#ff00b6"/><stop offset="0.8822" stop-color="#ff0099"/><stop offset="1" stop-color="#ff0080"/></linearGradient>
<linearGradient id="c77" gradientUnits="userSpaceOnUse" x1="501.0" x2="724.0" y1="0" y2="0"><stop offset="0" stop-color="#005fff"/><stop offset="0.2242" stop-color="#013cff"/><stop offset="0.3072" stop-color="#392eff"/><stop offset="0.5381" stop-color="#c600ff"/><stop offset="0.6323" stop-color="#ff00fe"/><stop offset="0.704" stop-color="#ff00d8"/><stop offset="0.787" stop-color="#ff00b8"/><stop offset="1" stop-color="#ff0084"/></linearGradient>
<linearGradient id="c78" gradientUnits="userSpaceOnUse" x1="502.0" x2="722.5" y1="0" y2="0"><stop offset="0" stop-color="#005cff"/><stop offset="0.2222" stop-color="#003aff"/><stop offset="0.5329" stop-color="#be00ff"/><stop offset="0.6417" stop-color="#ff00fe"/><stop offset="0.712" stop-color="#ff00da"/><stop offset="0.7937" stop-color="#ff00bb"/><stop offset="1" stop-color="#ff0087"/></linearGradient>
<linearGradient id="c79" gradientUnits="userSpaceOnUse" x1="503.0" x2="721.0" y1="0" y2="0"><stop offset="0" stop-color="#0059ff"/><stop offset="0.2225" stop-color="#0138ff"/><stop offset="0.5275" stop-color="#b700ff"/><stop offset="0.6514" stop-color="#ff00ff"/><stop offset="0.7202" stop-color="#ff00dc"/><stop offset="0.8005" stop-color="#ff00bd"/><stop offset="1" stop-color="#ff008b"/></linearGradient>
<linearGradient id="c80" gradientUnits="userSpaceOnUse" x1="503.5" x2="719.5" y1="0" y2="0"><stop offset="0" stop-color="#0056ff"/><stop offset="0.2222" stop-color="#0036ff"/><stop offset="0.5231" stop-color="#b000ff"/><stop offset="0.662" stop-color="#ff00ff"/><stop offset="0.7292" stop-color="#ff00dd"/><stop offset="0.8079" stop-color="#ff00bf"/><stop offset="1" stop-color="#ff008e"/></linearGradient>
<linearGradient id="c81" gradientUnits="userSpaceOnUse" x1="504.5" x2="718.0" y1="0" y2="0"><stop offset="0" stop-color="#0054ff"/><stop offset="0.2225" stop-color="#0134ff"/><stop offset="0.5176" stop-color="#aa00ff"/><stop offset="0.6721" stop-color="#ff00ff"/><stop offset="0.7377" stop-color="#ff00df"/><stop offset="0.815" stop-color="#ff00c1"/><stop offset="1" stop-color="#ff0092"/></linearGradient>
<linearGradient id="c82" gradientUnits="userSpaceOnUse" x1="505.5" x2="716.5" y1="0" y2="0"><stop offset="0" stop-color="#0051ff"/><stop offset="0.2204" stop-color="#0032ff"/><stop offset="0.5118" stop-color="#a300ff"/><stop offset="0.6825" stop-color="#ff00ff"/><stop offset="0.8223" stop-color="#ff00c4"/><stop offset="1" stop-color="#ff0096"/></linearGradient>
<linearGradient id="c83" gradientUnits="userSpaceOnUse" x1="506.5" x2="715.0" y1="0" y2="0"><stop offset="0" stop-color="#004fff"/><stop offset="0.2206" stop-color="#0130ff"/><stop offset="0.506" stop-color="#9c00ff"/><stop offset="0.693" stop-color="#ff00ff"/><stop offset="0.8273" stop-color="#ff00c7"/><stop offset="1" stop-color="#ff0099"/></linearGradient>
<linearGradient id="c84" gradientUnits="userSpaceOnUse" x1="507.5" x2="713.5" y1="0" y2="0"><stop offset="0" stop-color="#004cff"/><stop offset="0.2184" stop-color="#002fff"/><stop offset="0.5" stop-color="#9600ff"/><stop offset="0.7039" stop-color="#ff00ff"/><stop offset="0.835" stop-color="#ff00c9"/><stop offset="1" stop-color="#ff009d"/></linearGradient>
<linearGradient id="c85" gradientUnits="userSpaceOnUse" x1="508.0" x2="712.0" y1="0" y2="0"><stop offset="0" stop-color="#004aff"/><stop offset="0.2206" stop-color="#012dff"/><stop offset="0.4951" stop-color="#9000ff"/><stop offset="0.7157" stop-color="#ff00ff"/><stop offset="0.8431" stop-color="#ff00cb"/><stop offset="1" stop-color="#ff00a1"/></linearGradient>
<linearGradient id="c86" gradientUnits="userSpaceOnUse" x1="509.0" x2="710.5" y1="0" y2="0"><stop offset="0" stop-color="#0047ff"/><stop offset="0.2184" stop-color="#002bff"/><stop offset="0.4888" stop-color="#8a00ff"/><stop offset="0.727" stop-color="#ff00ff"/><stop offset="0.8511" stop-color="#ff00cd"/><stop offset="1" stop-color="#ff00a5"/></linearGradient>
<linearGradient id="c87" gradientUnits="userSpaceOnUse" x1="510.0" x2="709.0" y1="0" y2="0"><stop offset="0" stop-color="#0045ff"/><stop offset="0.2186" stop-color="#0129ff"/><stop offset="0.4824" stop-color="#8400ff"/><stop offset="0.7387" stop-color="#ff00ff"/><stop offset="0.8593" stop-color="#ff00cf"/><stop offset="1" stop-color="#ff00a9"/></linearGradient>
<linearGradient id="c88" gradientUnits="userSpaceOnUse" x1="511.0" x2="707.5" y1="0" y2="0"><stop offset="0" stop-color="#0043ff"/><stop offset="0.2163" stop-color="#0028ff"/><stop offset="0.4758" stop-color="#7f00ff"/><stop offset="0.7506" stop-color="#ff00ff"/><stop offset="0.8651" stop-color="#ff00d2"/><stop offset="1" stop-color="#ff00ae"/></linearGradient>
<linearGradient id="c89" gradientUnits="userSpaceOnUse" x1="512.0" x2="706.0" y1="0" y2="0"><stop offset="0" stop-color="#0040ff"/><stop offset="0.2165" stop-color="#0126ff"/><stop offset="0.4691" stop-color="#7900ff"/><stop offset="0.7629" stop-color="#fe00ff"/><stop offset="0.8737" stop-color="#ff00d5"/><stop offset="1" stop-color="#ff00b2"/></linearGradient>
<linearGradient id="c90" gradientUnits="userSpaceOnUse" x1="512.5" x2="704.5" y1="0" y2="0"><stop offset="0" stop-color="#003fff"/><stop offset="0.2161" stop-color="#0024ff"/><stop offset="0.4635" stop-color="#7400ff"/><stop offset="0.776" stop-color="#fe00ff"/><stop offset="0.8828" stop-color="#ff00d7"/><stop offset="1" stop-color="#ff00b6"/></linearGradient>
<linearGradient id="c91" gradientUnits="userSpaceOnUse" x1="513.5" x2="703.0" y1="0" y2="0"><stop offset="0" stop-color="#003cff"/><stop offset="0.2164" stop-color="#0123ff"/><stop offset="0.4565" stop-color="#6f00ff"/><stop offset="0.7889" stop-color="#fe00ff"/><stop offset="0.8892" stop-color="#ff00da"/><stop offset="1" stop-color="#ff00bb"/></linearGradient>
<linearGradient id="c92" gradientUnits="userSpaceOnUse" x1="514.5" x2="701.5" y1="0" y2="0"><stop offset="0" stop-color="#003aff"/><stop offset="0.2139" stop-color="#0021ff"/><stop offset="0.4492" stop-color="#6900ff"/><stop offset="0.8021" stop-color="#fe00ff"/><stop offset="0.8984" stop-color="#ff00dc"/><stop offset="1" stop-color="#ff00bf"/></linearGradient>
<linearGradient id="c93" gradientUnits="userSpaceOnUse" x1="515.5" x2="700.0" y1="0" y2="0"><stop offset="0" stop-color="#0038ff"/><stop offset="0.2141" stop-color="#011fff"/><stop offset="0.4417" stop-color="#6400ff"/><stop offset="0.8184" stop-color="#ff00ff"/><stop offset="1" stop-color="#ff00c4"/></linearGradient>
<linearGradient id="c94" gradientUnits="userSpaceOnUse" x1="516.5" x2="698.5" y1="0" y2="0"><stop offset="0" stop-color="#0036ff"/><stop offset="0.2115" stop-color="#001eff"/><stop offset="0.4341" stop-color="#5f00ff"/><stop offset="0.8324" stop-color="#ff00ff"/><stop offset="1" stop-color="#ff00c9"/></linearGradient>
<linearGradient id="c95" gradientUnits="userSpaceOnUse" x1="517.5" x2="697.0" y1="0" y2="0"><stop offset="0" stop-color="#0034ff"/><stop offset="0.2117" stop-color="#011cff"/><stop offset="0.4262" stop-color="#5b00ff"/><stop offset="0.8468" stop-color="#ff00ff"/><stop offset="1" stop-color="#ff00ce"/></linearGradient>
<linearGradient id="c96" gradientUnits="userSpaceOnUse" x1="518.5" x2="695.5" y1="0" y2="0"><stop offset="0" stop-color="#0032ff"/><stop offset="0.209" stop-color="#001bff"/><stop offset="0.4181" stop-color="#5600ff"/><stop offset="0.8616" stop-color="#ff00ff"/><stop offset="1" stop-color="#ff00d2"/></linearGradient>
<linearGradient id="c97" gradientUnits="userSpaceOnUse" x1="519.5" x2="694.0" y1="0" y2="0"><stop offset="0" stop-color="#0030ff"/><stop offset="0.2092" stop-color="#011aff"/><stop offset="0.4097" stop-color="#5100ff"/><stop offset="0.8768" stop-color="#ff00ff"/><stop offset="1" stop-color="#ff00d8"/></linearGradient>
<linearGradient id="c98" gradientUnits="userSpaceOnUse" x1="520.0" x2="692.5" y1="0" y2="0"><stop offset="0" stop-color="#002eff"/><stop offset="0.2087" stop-color="#0018ff"/><stop offset="0.4029" stop-color="#4d00ff"/><stop offset="0.8928" stop-color="#ff00ff"/><stop offset="1" stop-color="#ff00dd"/></linearGradient>
<linearGradient id="c99" gradientUnits="userSpaceOnUse" x1="521.0" x2="691.0" y1="0" y2="0"><stop offset="0" stop-color="#002cff"/><stop offset="0.2088" stop-color="#0117ff"/><stop offset="0.3941" stop-color="#4800ff"/><stop offset="0.9088" stop-color="#ff00ff"/><stop offset="1" stop-color="#ff00e2"/></linearGradient>
<linearGradient id="c100" gradientUnits="userSpaceOnUse" x1="522.0" x2="689.5" y1="0" y2="0"><stop offset="0" stop-color="#002aff"/><stop offset="0.206" stop-color="#0016ff"/><stop offset="0.3851" stop-color="#4400ff"/><stop offset="0.9254" stop-color="#ff00ff"/><stop offset="1" stop-color="#ff00e8"/></linearGradient>
<linearGradient id="c101" gradientUnits="userSpaceOnUse" x1="523.0" x2="688.0" y1="0" y2="0"><stop offset="0" stop-color="#0029ff"/><stop offset="0.2061" stop-color="#0114ff"/><stop offset="0.3758" stop-color="#3f00ff"/><stop offset="0.9424" stop-color="#ff00ff"/><stop offset="1" stop-color="#ff00ed"/></linearGradient>
<linearGradient id="c102" gradientUnits="userSpaceOnUse" x1="524.0" x2="686.5" y1="0" y2="0"><stop offset="0" stop-color="#0027ff"/><stop offset="0.2031" stop-color="#0013ff"/><stop offset="0.3662" stop-color="#3b00ff"/><stop offset="0.96" stop-color="#fe00ff"/><stop offset="1" stop-color="#ff00f3"/></linearGradient>
<linearGradient id="c103" gradientUnits="userSpaceOnUse" x1="525.0" x2="685.0" y1="0" y2="0"><stop offset="0" stop-color="#0025ff"/><stop offset="0.2031" stop-color="#0111ff"/><stop offset="0.3594" stop-color="#3800ff"/><stop offset="0.9781" stop-color="#fe00ff"/><stop offset="1" stop-color="#ff00f9"/></linearGradient>
<linearGradient id="c104" gradientUnits="userSpaceOnUse" x1="526.0" x2="683.5" y1="0" y2="0"><stop offset="0" stop-color="#0023ff"/><stop offset="0.2" stop-color="#0010ff"/><stop offset="0.3492" stop-color="#3400ff"/><stop offset="1" stop-color="#ff00ff"/></linearGradient>
<linearGradient id="c105" gradientUnits="userSpaceOnUse" x1="527.0" x2="682.0" y1="0" y2="0"><stop offset="0" stop-color="#0021ff"/><stop offset="0.2" stop-color="#010fff"/><stop offset="0.3387" stop-color="#3000ff"/><stop offset="1" stop-color="#f900ff"/></linearGradient>
<linearGradient id="c106" gradientUnits="userSpaceOnUse" x1="528.0" x2="680.5" y1="0" y2="0"><stop offset="0" stop-color="#0020ff"/><stop offset="0.1967" stop-color="#000eff"/><stop offset="0.3279" stop-color="#2c00ff"/><stop offset="1" stop-color="#f300ff"/></linearGradient>
<linearGradient id="c107" gradientUnits="userSpaceOnUse" x1="529.0" x2="679.0" y1="0" y2="0"><stop offset="0" stop-color="#001eff"/><stop offset="0.1967" stop-color="#010cff"/><stop offset="0.3167" stop-color="#2800ff"/><stop offset="1" stop-color="#ee00ff"/></linearGradient>
<linearGradient id="c108" gradientUnits="userSpaceOnUse" x1="530.5" x2="677.5" y1="0" y2="0"><stop offset="0" stop-color="#001cff"/><stop offset="0.1905" stop-color="#000bff"/><stop offset="0.3027" stop-color="#2400ff"/><stop offset="1" stop-color="#e800ff"/></linearGradient>
<linearGradient id="c109" gradientUnits="userSpaceOnUse" x1="531.5" x2="676.0" y1="0" y2="0"><stop offset="0" stop-color="#001aff"/><stop offset="0.1903" stop-color="#010aff"/><stop offset="0.2907" stop-color="#2000ff"/><stop offset="1" stop-color="#e200ff"/></linearGradient>
<linearGradient id="c110" gradientUnits="userSpaceOnUse" x1="532.5" x2="674.5" y1="0" y2="0"><stop offset="0" stop-color="#0019ff"/><stop offset="0.1866" stop-color="#0009ff"/><stop offset="0.2782" stop-color="#1c00ff"/><stop offset="1" stop-color="#dd00ff"/></linearGradient>
<linearGradient id="c111" gradientUnits="userSpaceOnUse" x1="533.5" x2="673.0" y1="0" y2="0"><stop offset="0" stop-color="#0017ff"/><stop offset="0.1864" stop-color="#0108ff"/><stop offset="0.2652" stop-color="#1900ff"/><stop offset="1" stop-color="#d800ff"/></linearGradient>
<linearGradient id="c112" gradientUnits="userSpaceOnUse" x1="534.5" x2="671.5" y1="0" y2="0"><stop offset="0" stop-color="#0015ff"/><stop offset="0.1825" stop-color="#0006ff"/><stop offset="0.2518" stop-color="#1500ff"/><stop offset="1" stop-color="#d300ff"/></linearGradient>
<linearGradient id="c113" gradientUnits="userSpaceOnUse" x1="535.5" x2="670.0" y1="0" y2="0"><stop offset="0" stop-color="#0014ff"/><stop offset="0.1822" stop-color="#0105ff"/><stop offset="0.2379" stop-color="#1100ff"/><stop offset="1" stop-color="#cd00ff"/></linearGradient>
<linearGradient id="c114" gradientUnits="userSpaceOnUse" x1="536.5" x2="668.5" y1="0" y2="0"><stop offset="0" stop-color="#0012ff"/><stop offset="0.178" stop-color="#0004ff"/><stop offset="0.3939" stop-color="#3900ff"/><stop offset="1" stop-color="#c800ff"/></linearGradient>
<linearGradient id="c115" gradientUnits="userSpaceOnUse" x1="538.0" x2="667.0" y1="0" y2="0"><stop offset="0" stop-color="#0010ff"/><stop offset="0.1744" stop-color="#0103ff"/><stop offset="0.3953" stop-color="#3900ff"/><stop offset="1" stop-color="#c400ff"/></linearGradient>
<linearGradient id="c116" gradientUnits="userSpaceOnUse" x1="539.0" x2="665.5" y1="0" y2="0"><stop offset="0" stop-color="#000fff"/><stop offset="0.17" stop-color="#0002ff"/><stop offset="0.3913" stop-color="#3700ff"/><stop offset="1" stop-color="#bf00ff"/></linearGradient>
<linearGradient id="c117" gradientUnits="userSpaceOnUse" x1="540.0" x2="664.0" y1="0" y2="0"><stop offset="0" stop-color="#000dff"/><stop offset="0.1694" stop-color="#0100ff"/><stop offset="1" stop-color="#ba00ff"/></linearGradient>
<linearGradient id="c118" gradientUnits="userSpaceOnUse" x1="541.5" x2="662.5" y1="0" y2="0"><stop offset="0" stop-color="#000bff"/><stop offset="0.1612" stop-color="#0000ff"/><stop offset="1" stop-color="#b500ff"/></linearGradient>
<linearGradient id="c119" gradientUnits="userSpaceOnUse" x1="542.5" x2="661.0" y1="0" y2="0"><stop offset="0" stop-color="#000aff"/><stop offset="0.1603" stop-color="#0100ff"/><stop offset="1" stop-color="#b100ff"/></linearGradient>
<linearGradient id="c120" gradientUnits="userSpaceOnUse" x1="543.5" x2="660.0" y1="0" y2="0"><stop offset="0" stop-color="#0008ff"/><stop offset="0.1545" stop-color="#0000ff"/><stop offset="1" stop-color="#ad00ff"/></linearGradient>
<linearGradient id="c121" gradientUnits="userSpaceOnUse" x1="545.0" x2="658.5" y1="0" y2="0"><stop offset="0" stop-color="#0007ff"/><stop offset="0.1498" stop-color="#0100ff"/><stop offset="1" stop-color="#a900ff"/></linearGradient>
<linearGradient id="c122" gradientUnits="userSpaceOnUse" x1="546.0" x2="657.0" y1="0" y2="0"><stop offset="0" stop-color="#0005ff"/><stop offset="0.1441" stop-color="#0000ff"/><stop offset="1" stop-color="#a500ff"/></linearGradient>
<linearGradient id="c123" gradientUnits="userSpaceOnUse" x1="547.5" x2="655.5" y1="0" y2="0"><stop offset="0" stop-color="#0003ff"/><stop offset="0.1389" stop-color="#0100ff"/><stop offset="1" stop-color="#a000ff"/></linearGradient>
<linearGradient id="c124" gradientUnits="userSpaceOnUse" x1="548.5" x2="654.0" y1="0" y2="0"><stop offset="0" stop-color="#0002ff"/><stop offset="0.1327" stop-color="#0000ff"/><stop offset="1" stop-color="#9c00ff"/></linearGradient>
<linearGradient id="c125" gradientUnits="userSpaceOnUse" x1="550.0" x2="652.5" y1="0" y2="0"><stop offset="0" stop-color="#0000ff"/><stop offset="0.1268" stop-color="#0100ff"/><stop offset="1" stop-color="#9800ff"/></linearGradient>
<linearGradient id="c126" gradientUnits="userSpaceOnUse" x1="551.0" x2="651.0" y1="0" y2="0"><stop offset="0" stop-color="#0000ff"/><stop offset="0.12" stop-color="#0000ff"/><stop offset="1" stop-color="#9400ff"/></linearGradient>
<linearGradient id="c127" gradientUnits="userSpaceOnUse" x1="552.5" x2="649.5" y1="0" y2="0"><stop offset="0" stop-color="#0000ff"/><stop offset="0.1134" stop-color="#0100ff"/><stop offset="1" stop-color="#9000ff"/></linearGradient>
<linearGradient id="c128" gradientUnits="userSpaceOnUse" x1="553.5" x2="648.0" y1="0" y2="0"><stop offset="0" stop-color="#0000ff"/><stop offset="0.1058" stop-color="#0000ff"/><stop offset="1" stop-color="#8c00ff"/></linearGradient>
<linearGradient id="c129" gradientUnits="userSpaceOnUse" x1="555.0" x2="646.5" y1="0" y2="0"><stop offset="0" stop-color="#0000ff"/><stop offset="0.0984" stop-color="#0100ff"/><stop offset="1" stop-color="#8800ff"/></linearGradient>
<linearGradient id="c130" gradientUnits="userSpaceOnUse" x1="556.5" x2="645.0" y1="0" y2="0"><stop offset="0" stop-color="#0000ff"/><stop offset="0.0847" stop-color="#0000ff"/><stop offset="1" stop-color="#8500ff"/></linearGradient>
<linearGradient id="c131" gradientUnits="userSpaceOnUse" x1="557.5" x2="643.5" y1="0" y2="0"><stop offset="0" stop-color="#0000ff"/><stop offset="0.0814" stop-color="#0100ff"/><stop offset="1" stop-color="#8100ff"/></linearGradient>
<linearGradient id="c132" gradientUnits="userSpaceOnUse" x1="559.0" x2="642.0" y1="0" y2="0"><stop offset="0" stop-color="#0000ff"/><stop offset="0.0663" stop-color="#0000ff"/><stop offset="1" stop-color="#7d00ff"/></linearGradient>
<linearGradient id="c133" gradientUnits="userSpaceOnUse" x1="560.5" x2="640.5" y1="0" y2="0"><stop offset="0" stop-color="#0000ff"/><stop offset="0.0563" stop-color="#0100ff"/><stop offset="1" stop-color="#7a00ff"/></linearGradient>
<linearGradient id="c134" gradientUnits="userSpaceOnUse" x1="562.0" x2="639.0" y1="0" y2="0"><stop offset="0" stop-color="#0000ff"/><stop offset="0.039" stop-color="#0000ff"/><stop offset="1" stop-color="#7600ff"/></linearGradient>
<linearGradient id="c135" gradientUnits="userSpaceOnUse" x1="563.5" x2="637.5" y1="0" y2="0"><stop offset="0" stop-color="#0000ff"/><stop offset="1" stop-color="#7300ff"/></linearGradient>
<linearGradient id="c136" gradientUnits="userSpaceOnUse" x1="565.0" x2="636.0" y1="0" y2="0"><stop offset="0" stop-color="#0000ff"/><stop offset="1" stop-color="#6f00ff"/></linearGradient>
<linearGradient id="c137" gradientUnits="userSpaceOnUse" x1="567.0" x2="634.5" y1="0" y2="0"><stop offset="0" stop-color="#0300ff"/><stop offset="1" stop-color="#6c00ff"/></linearGradient>
<linearGradient id="c138" gradientUnits="userSpaceOnUse" x1="568.5" x2="633.0" y1="0" y2="0"><stop offset="0" stop-color="#0500ff"/><stop offset="1" stop-color="#6900ff"/></linearGradient>
<linearGradient id="c139" gradientUnits="userSpaceOnUse" x1="570.0" x2="631.5" y1="0" y2="0"><stop offset="0" stop-color="#0700ff"/><stop offset="1" stop-color="#6500ff"/></linearGradient>
<linearGradient id="c140" gradientUnits="userSpaceOnUse" x1="572.0" x2="630.0" y1="0" y2="0"><stop offset="0" stop-color="#0a00ff"/><stop offset="1" stop-color="#6200ff"/></linearGradient>
<linearGradient id="c141" gradientUnits="userSpaceOnUse" x1="573.5" x2="628.5" y1="0" y2="0"><stop offset="0" stop-color="#0c00ff"/><stop offset="1" stop-color="#5f00ff"/></linearGradient>
<linearGradient id="c142" gradientUnits="userSpaceOnUse" x1="575.5" x2="627.0" y1="0" y2="0"><stop offset="0" stop-color="#0f00ff"/><stop offset="1" stop-color="#5c00ff"/></linearGradient>
<linearGradient id="c143" gradientUnits="userSpaceOnUse" x1="577.0" x2="625.5" y1="0" y2="0"><stop offset="0" stop-color="#1100ff"/><stop offset="1" stop-color="#5900ff"/></linearGradient>
<linearGradient id="c144" gradientUnits="userSpaceOnUse" x1="579.0" x2="624.0" y1="0" y2="0"><stop offset="0" stop-color="#1400ff"/><stop offset="1" stop-color="#5500ff"/></linearGradient>
<linearGradient id="c145" gradientUnits="userSpaceOnUse" x1="581.0" x2="622.5" y1="0" y2="0"><stop offset="0" stop-color="#1600ff"/><stop offset="1" stop-color="#5200ff"/></linearGradient>
<linearGradient id="c146" gradientUnits="userSpaceOnUse" x1="582.5" x2="621.0" y1="0" y2="0"><stop offset="0" stop-color="#1800ff"/><stop offset="1" stop-color="#4f00ff"/></linearGradient>
<linearGradient id="c147" gradientUnits="userSpaceOnUse" x1="584.5" x2="619.5" y1="0" y2="0"><stop offset="0" stop-color="#1b00ff"/><stop offset="1" stop-color="#4d00ff"/></linearGradient>
<linearGradient id="c148" gradientUnits="userSpaceOnUse" x1="586.5" x2="618.0" y1="0" y2="0"><stop offset="0" stop-color="#1d00ff"/><stop offset="1" stop-color="#4a00ff"/></linearGradient>
<linearGradient id="c149" gradientUnits="userSpaceOnUse" x1="588.5" x2="616.5" y1="0" y2="0"><stop offset="0" stop-color="#1f00ff"/><stop offset="1" stop-color="#4700ff"/></linearGradient>
<linearGradient id="c150" gradientUnits="userSpaceOnUse" x1="590.0" x2="615.0" y1="0" y2="0"><stop offset="0" stop-color="#2100ff"/><stop offset="1" stop-color="#4400ff"/></linearGradient>
<linearGradient id="c151" gradientUnits="userSpaceOnUse" x1="592.0" x2="613.5" y1="0" y2="0"><stop offset="0" stop-color="#2300ff"/><stop offset="1" stop-color="#4100ff"/></linearGradient>
<linearGradient id="c152" gradientUnits="userSpaceOnUse" x1="594.0" x2="612.0" y1="0" y2="0"><stop offset="0" stop-color="#2500ff"/><stop offset="1" stop-color="#3e00ff"/></linearGradient>
<linearGradient id="c153" gradientUnits="userSpaceOnUse" x1="595.5" x2="610.5" y1="0" y2="0"><stop offset="0" stop-color="#2700ff"/><stop offset="1" stop-color="#3c00ff"/></linearGradient>
<linearGradient id="c154" gradientUnits="userSpaceOnUse" x1="597.5" x2="609.0" y1="0" y2="0"><stop offset="0" stop-color="#2900ff"/><stop offset="1" stop-color="#3900ff"/></linearGradient>
<linearGradient id="c155" gradientUnits="userSpaceOnUse" x1="599.5" x2="607.5" y1="0" y2="0"><stop offset="0" stop-color="#2b00ff"/><stop offset="1" stop-color="#3600ff"/></linearGradient>
<linearGradient id="c156" gradientUnits="userSpaceOnUse" x1="601.5" x2="606.0" y1="0" y2="0"><stop offset="0" stop-color="#2d00ff"/><stop offset="1" stop-color="#3300ff"/></linearGradient>
<clipPath id="cf"><rect x="465.5" y="101.5" width="323.4" height="327.5"/></clipPath>
<filter id="vb" x="0" y="0" width="1" height="1" filterUnits="objectBoundingBox"><feGaussianBlur stdDeviation="0 1.1"/></filter>
<linearGradient id="in1" gradientUnits="userSpaceOnUse" x1="700" y1="360" x2="790" y2="392"><stop offset="0" stop-color="#9cff10"/><stop offset="0.28" stop-color="#d4ff14"/><stop offset="0.5" stop-color="#fff21c"/><stop offset="0.75" stop-color="#ffd010"/><stop offset="1" stop-color="#ffa800"/></linearGradient>
<clipPath id="ci"><rect x="703.2" y="336.3" width="84.9" height="71.1"/></clipPath>
<clipPath id="cs2"><rect x="0" y="454" width="655.6" height="23"/></clipPath></defs>
<g transform="translate(4.3,5)"><rect x="-1.7" y="-4.2" width="3" height="3" transform="rotate(45 -0.2 -2.7)" fill="#f0cf20"/><rect x="-4.4" y="-1.5" width="3" height="3" transform="rotate(45 -2.9 0)" fill="#3a9ee0"/><rect x="1" y="-1.5" width="3" height="3" transform="rotate(45 2.5 0)" fill="#40b848"/><rect x="-1.7" y="1.2" width="3" height="3" transform="rotate(45 -0.2 2.7)" fill="#e43a50"/></g>
<path d="M745.6 4.6h4.6" stroke="#222" stroke-width="0.7"/>
<rect x="766.2" y="3.4" width="3.4" height="3.4" fill="none" stroke="#222" stroke-width="0.7"/><path d="M767.4 3.4v-1h3.4v3.4h-1.2" fill="none" stroke="#222" stroke-width="0.7"/>
<path d="M787 2.6l4.2 4.2M791.2 2.6l-4.2 4.2" stroke="#222" stroke-width="0.7"/>
<g opacity="0.95"><rect x="13.98" y="11.78" width="2.05" height="2.05" transform="rotate(45 15.00 12.80)" fill="#fff"/><rect x="12.08" y="13.68" width="2.05" height="2.05" transform="rotate(45 13.10 14.70)" fill="#fff"/><rect x="10.18" y="15.58" width="2.05" height="2.05" transform="rotate(45 11.20 16.60)" fill="#fff"/><rect x="15.88" y="13.68" width="2.05" height="2.05" transform="rotate(45 16.90 14.70)" fill="#fff"/><rect x="13.98" y="15.58" width="2.05" height="2.05" transform="rotate(45 15.00 16.60)" fill="#fff"/><rect x="12.08" y="17.48" width="2.05" height="2.05" transform="rotate(45 13.10 18.50)" fill="#fff"/><rect x="17.78" y="15.58" width="2.05" height="2.05" transform="rotate(45 18.80 16.60)" fill="#fff"/><rect x="15.88" y="17.48" width="2.05" height="2.05" transform="rotate(45 16.90 18.50)" fill="#fff"/><rect x="13.98" y="19.38" width="2.05" height="2.05" transform="rotate(45 15.00 20.40)" fill="#fff"/></g>
<path d="M71.2 16.2h3.8l-1.9 2.3z" fill="#fff"/>
<path d="M5.2 30.2l2.6 1.6l-2.6 1.6z" fill="#f4f4f4"/>
<path d="M620.1 31.4h4.6l-2.3 2.8z" fill="#fff"/>
<path d="M689.2 31.4h4.6l-2.3 2.8z" fill="#fff"/>
<path d="M745.4 31.4h4.6l-2.3 2.8z" fill="#fff"/>
<path d="M796.4 30l-3 2.2l3 2.2z" fill="#f4f4f4"/>
<rect x="13.50" y="154.75" width="79.10" height="76.75" fill="#232323"/>
<path d="M13.50 180.40H92.60" stroke="#8c8c8c" stroke-width="0.9"/>
<path d="M13.50 205.90H92.60" stroke="#8c8c8c" stroke-width="0.9"/>
<rect x="13.50" y="154.75" width="79.10" height="76.75" fill="none" stroke="#8c8c8c" stroke-width="0.9"/>
<path d="M10.90 154.75H13.50" stroke="#8c8c8c" stroke-width="0.9"/>
<path d="M10.90 180.40H13.50" stroke="#8c8c8c" stroke-width="0.9"/>
<path d="M10.90 205.90H13.50" stroke="#8c8c8c" stroke-width="0.9"/>
<path d="M10.90 231.50H13.50" stroke="#8c8c8c" stroke-width="0.9"/>
<path d="M13.50 231.50V233.30" stroke="#8c8c8c" stroke-width="0.9"/>
<path d="M92.60 231.50V233.30" stroke="#8c8c8c" stroke-width="0.9"/>
<rect x="22" y="228" width="61" height="3.1" fill="url(#gy)" stroke="#222200" stroke-width="0.4"/>
<rect x="118.30" y="154.75" width="79.00" height="76.75" fill="#232323"/>
<path d="M118.30 180.40H197.30" stroke="#8c8c8c" stroke-width="0.9"/>
<path d="M118.30 205.90H197.30" stroke="#8c8c8c" stroke-width="0.9"/>
<rect x="118.30" y="154.75" width="79.00" height="76.75" fill="none" stroke="#8c8c8c" stroke-width="0.9"/>
<path d="M115.70 154.75H118.30" stroke="#8c8c8c" stroke-width="0.9"/>
<path d="M115.70 180.40H118.30" stroke="#8c8c8c" stroke-width="0.9"/>
<path d="M115.70 205.90H118.30" stroke="#8c8c8c" stroke-width="0.9"/>
<path d="M115.70 231.50H118.30" stroke="#8c8c8c" stroke-width="0.9"/>
<path d="M118.30 231.50V233.30" stroke="#8c8c8c" stroke-width="0.9"/>
<path d="M197.30 231.50V233.30" stroke="#8c8c8c" stroke-width="0.9"/>
<rect x="126.6" y="221.6" width="61.4" height="9.5" fill="url(#gy)" stroke="#222200" stroke-width="0.4"/>
<rect x="222.00" y="154.75" width="78.40" height="76.75" fill="#232323"/>
<path d="M222.00 180.40H300.40" stroke="#8c8c8c" stroke-width="0.9"/>
<path d="M222.00 205.90H300.40" stroke="#8c8c8c" stroke-width="0.9"/>
<rect x="222.00" y="154.75" width="78.40" height="76.75" fill="none" stroke="#8c8c8c" stroke-width="0.9"/>
<path d="M219.40 154.75H222.00" stroke="#8c8c8c" stroke-width="0.9"/>
<path d="M219.40 180.40H222.00" stroke="#8c8c8c" stroke-width="0.9"/>
<path d="M219.40 205.90H222.00" stroke="#8c8c8c" stroke-width="0.9"/>
<path d="M219.40 231.50H222.00" stroke="#8c8c8c" stroke-width="0.9"/>
<path d="M222.00 231.50V233.30" stroke="#8c8c8c" stroke-width="0.9"/>
<path d="M300.40 231.50V233.30" stroke="#8c8c8c" stroke-width="0.9"/>
<rect x="230.6" y="228.3" width="61" height="2.8" fill="url(#gy)" stroke="#222200" stroke-width="0.4"/>
<rect x="329.30" y="102.40" width="108.30" height="129.10" fill="#232323"/>
<path d="M329.30 134.80H437.60" stroke="#8c8c8c" stroke-width="0.9"/>
<path d="M329.30 166.90H437.60" stroke="#8c8c8c" stroke-width="0.9"/>
<path d="M329.30 199.00H437.60" stroke="#8c8c8c" stroke-width="0.9"/>
<rect x="329.30" y="102.40" width="108.30" height="129.10" fill="none" stroke="#8c8c8c" stroke-width="0.9"/>
<path d="M326.70 102.40H329.30" stroke="#8c8c8c" stroke-width="0.9"/>
<path d="M326.70 134.80H329.30" stroke="#8c8c8c" stroke-width="0.9"/>
<path d="M326.70 166.90H329.30" stroke="#8c8c8c" stroke-width="0.9"/>
<path d="M326.70 199.00H329.30" stroke="#8c8c8c" stroke-width="0.9"/>
<path d="M326.70 231.50H329.30" stroke="#8c8c8c" stroke-width="0.9"/>
<path d="M329.30 231.50V233.30" stroke="#8c8c8c" stroke-width="0.9"/>
<path d="M437.60 231.50V233.30" stroke="#8c8c8c" stroke-width="0.9"/>
<rect x="341" y="156.6" width="27" height="10.3" fill="url(#gr)" stroke="#300" stroke-width="0.5"/>
<rect x="369.8" y="161.2" width="27" height="5.7" fill="url(#gg)" stroke="#020" stroke-width="0.5"/>
<rect x="398.2" y="166.9" width="27.8" height="59.4" fill="url(#gb)" stroke="#002" stroke-width="0.5"/>
<rect x="9.20" y="245.20" width="27.4" height="6.9" fill="#ffffff" stroke="#e8e8e8" stroke-opacity="0.8" stroke-width="0.8" clip-path="url(#cs1)"/>
<rect x="9.20" y="254.30" width="27.4" height="6.9" fill="#ffffff" stroke="#e8e8e8" stroke-opacity="0.8" stroke-width="0.8" clip-path="url(#cs1)"/>
<rect x="41.85" y="245.20" width="27.4" height="6.9" fill="#e4e4e4" stroke="#e8e8e8" stroke-opacity="0.8" stroke-width="0.8" clip-path="url(#cs1)"/>
<rect x="41.85" y="254.30" width="27.4" height="6.9" fill="#e4e4e4" stroke="#e8e8e8" stroke-opacity="0.8" stroke-width="0.8" clip-path="url(#cs1)"/>
<rect x="74.50" y="245.20" width="27.4" height="6.9" fill="#d0d0d0" stroke="#e8e8e8" stroke-opacity="0.8" stroke-width="0.8" clip-path="url(#cs1)"/>
<rect x="74.50" y="254.30" width="27.4" height="6.9" fill="#d0d0d0" stroke="#e8e8e8" stroke-opacity="0.8" stroke-width="0.8" clip-path="url(#cs1)"/>
<rect x="107.15" y="245.20" width="27.4" height="6.9" fill="#bcbcbc" stroke="#e8e8e8" stroke-opacity="0.8" stroke-width="0.8" clip-path="url(#cs1)"/>
<rect x="107.15" y="254.30" width="27.4" height="6.9" fill="#bcbcbc" stroke="#e8e8e8" stroke-opacity="0.8" stroke-width="0.8" clip-path="url(#cs1)"/>
<rect x="139.80" y="245.20" width="27.4" height="6.9" fill="#a4a4a4" stroke="#e8e8e8" stroke-opacity="0.8" stroke-width="0.8" clip-path="url(#cs1)"/>
<rect x="139.80" y="254.30" width="27.4" height="6.9" fill="#a4a4a4" stroke="#e8e8e8" stroke-opacity="0.8" stroke-width="0.8" clip-path="url(#cs1)"/>
<rect x="172.45" y="245.20" width="27.4" height="6.9" fill="#000000" stroke="#e8e8e8" stroke-opacity="0.8" stroke-width="0.8" clip-path="url(#cs1)"/>
<rect x="172.45" y="254.30" width="27.4" height="6.9" fill="#000000" stroke="#e8e8e8" stroke-opacity="0.8" stroke-width="0.8" clip-path="url(#cs1)"/>
<rect x="205.10" y="245.20" width="27.4" height="6.9" fill="#7a5545" stroke="#e8e8e8" stroke-opacity="0.8" stroke-width="0.8" clip-path="url(#cs1)"/>
<rect x="205.10" y="254.30" width="27.4" height="6.9" fill="#7a5545" stroke="#e8e8e8" stroke-opacity="0.8" stroke-width="0.8" clip-path="url(#cs1)"/>
<rect x="237.75" y="245.20" width="27.4" height="6.9" fill="#c89a86" stroke="#e8e8e8" stroke-opacity="0.8" stroke-width="0.8" clip-path="url(#cs1)"/>
<rect x="237.75" y="254.30" width="27.4" height="6.9" fill="#c89a86" stroke="#e8e8e8" stroke-opacity="0.8" stroke-width="0.8" clip-path="url(#cs1)"/>
<rect x="270.40" y="245.20" width="27.4" height="6.9" fill="#6482a8" stroke="#e8e8e8" stroke-opacity="0.8" stroke-width="0.8" clip-path="url(#cs1)"/>
<rect x="270.40" y="254.30" width="27.4" height="6.9" fill="#6482a8" stroke="#e8e8e8" stroke-opacity="0.8" stroke-width="0.8" clip-path="url(#cs1)"/>
<rect x="303.05" y="245.20" width="27.4" height="6.9" fill="#5c6e42" stroke="#e8e8e8" stroke-opacity="0.8" stroke-width="0.8" clip-path="url(#cs1)"/>
<rect x="303.05" y="254.30" width="27.4" height="6.9" fill="#5c6e42" stroke="#e8e8e8" stroke-opacity="0.8" stroke-width="0.8" clip-path="url(#cs1)"/>
<rect x="335.70" y="245.20" width="27.4" height="6.9" fill="#8888c0" stroke="#e8e8e8" stroke-opacity="0.8" stroke-width="0.8" clip-path="url(#cs1)"/>
<rect x="335.70" y="254.30" width="27.4" height="6.9" fill="#8888c0" stroke="#e8e8e8" stroke-opacity="0.8" stroke-width="0.8" clip-path="url(#cs1)"/>
<rect x="368.35" y="245.20" width="27.4" height="6.9" fill="#68c8b0" stroke="#e8e8e8" stroke-opacity="0.8" stroke-width="0.8" clip-path="url(#cs1)"/>
<rect x="368.35" y="254.30" width="27.4" height="6.9" fill="#68c8b0" stroke="#e8e8e8" stroke-opacity="0.8" stroke-width="0.8" clip-path="url(#cs1)"/>
<rect x="401.00" y="245.20" width="27.4" height="6.9" fill="#e68a30" stroke="#e8e8e8" stroke-opacity="0.8" stroke-width="0.8" clip-path="url(#cs1)"/>
<rect x="401.00" y="254.30" width="27.4" height="6.9" fill="#e68a30" stroke="#e8e8e8" stroke-opacity="0.8" stroke-width="0.8" clip-path="url(#cs1)"/>
<rect x="433.65" y="245.20" width="27.4" height="6.9" fill="#4a5cb0" stroke="#e8e8e8" stroke-opacity="0.8" stroke-width="0.8" clip-path="url(#cs1)"/>
<rect x="433.65" y="254.30" width="27.4" height="6.9" fill="#4a5cb0" stroke="#e8e8e8" stroke-opacity="0.8" stroke-width="0.8" clip-path="url(#cs1)"/>
<path d="M5.2 280.6l-2.6 1.7l2.6 1.7z" fill="#ddd"/><path d="M442.8 280.6l2.6 1.7l-2.6 1.7z" fill="#ddd"/>
<rect x="13.50" y="307.40" width="424.20" height="132.10" fill="#232323"/>
<path d="M10.90 439.50H437.70" stroke="#8c8c8c" stroke-width="0.9"/>
<path d="M10.90 421.95H437.70" stroke="#8c8c8c" stroke-width="0.9"/>
<path d="M10.90 404.40H437.70" stroke="#8c8c8c" stroke-width="0.9"/>
<path d="M10.90 386.85H437.70" stroke="#8c8c8c" stroke-width="0.9"/>
<path d="M10.90 369.30H437.70" stroke="#8c8c8c" stroke-width="0.9"/>
<path d="M10.90 351.75H437.70" stroke="#8c8c8c" stroke-width="0.9"/>
<path d="M10.90 334.20H437.70" stroke="#8c8c8c" stroke-width="0.9"/>
<path d="M10.90 316.65H437.70" stroke="#8c8c8c" stroke-width="0.9"/>
<rect x="13.50" y="307.40" width="424.20" height="132.10" fill="none" stroke="#8c8c8c" stroke-width="0.9"/>
<path d="M13.50 439.50V441.30" stroke="#8c8c8c" stroke-width="0.9"/>
<rect x="16.1" y="438.18" width="9.8" height="1.32" fill="#ffffff" stroke="#000" stroke-opacity=".7" stroke-width="0.6"/>
<rect x="30.2" y="437.75" width="9.8" height="1.76" fill="#e4e4e4" stroke="#000" stroke-opacity=".7" stroke-width="0.6"/>
<rect x="44.3" y="439.06" width="9.8" height="0.44" fill="#d0d0d0" stroke="#000" stroke-opacity=".7" stroke-width="0.6"/>
<rect x="58.4" y="434.67" width="9.8" height="4.83" fill="#bcbcbc" stroke="#000" stroke-opacity=".7" stroke-width="0.6"/>
<rect x="72.5" y="432.92" width="9.8" height="6.58" fill="#a4a4a4" stroke="#000" stroke-opacity=".7" stroke-width="0.6"/>
<rect x="100.7" y="435.99" width="9.8" height="3.51" fill="#7a5545" stroke="#000" stroke-opacity=".7" stroke-width="0.6"/>
<rect x="114.8" y="435.11" width="9.8" height="4.39" fill="#c89a86" stroke="#000" stroke-opacity=".7" stroke-width="0.6"/>
<rect x="128.9" y="434.67" width="9.8" height="4.83" fill="#6482a8" stroke="#000" stroke-opacity=".7" stroke-width="0.6"/>
<rect x="143.0" y="437.31" width="9.8" height="2.19" fill="#5c6e42" stroke="#000" stroke-opacity=".7" stroke-width="0.6"/>
<rect x="157.1" y="435.11" width="9.8" height="4.39" fill="#8888c0" stroke="#000" stroke-opacity=".7" stroke-width="0.6"/>
<rect x="171.2" y="434.24" width="9.8" height="5.26" fill="#68c8b0" stroke="#000" stroke-opacity=".7" stroke-width="0.6"/>
<rect x="185.3" y="425.46" width="9.8" height="14.04" fill="#e68a30" stroke="#000" stroke-opacity=".7" stroke-width="0.6"/>
<rect x="199.4" y="434.67" width="9.8" height="4.83" fill="#4a5cb0" stroke="#000" stroke-opacity=".7" stroke-width="0.6"/>
<rect x="213.5" y="434.24" width="9.8" height="5.26" fill="#d05068" stroke="#000" stroke-opacity=".7" stroke-width="0.6"/>
<rect x="227.6" y="439.06" width="9.8" height="0.44" fill="#603c78" stroke="#000" stroke-opacity=".7" stroke-width="0.6"/>
<rect x="241.7" y="438.18" width="9.8" height="1.32" fill="#b0d048" stroke="#000" stroke-opacity=".7" stroke-width="0.6"/>
<rect x="255.8" y="434.24" width="9.8" height="5.26" fill="#f0a828" stroke="#000" stroke-opacity=".7" stroke-width="0.6"/>
<rect x="269.9" y="434.24" width="9.8" height="5.26" fill="#3040a8" stroke="#000" stroke-opacity=".7" stroke-width="0.6"/>
<rect x="284.0" y="436.87" width="9.8" height="2.63" fill="#48a048" stroke="#000" stroke-opacity=".7" stroke-width="0.6"/>
<rect x="298.1" y="435.99" width="9.8" height="3.51" fill="#d02838" stroke="#000" stroke-opacity=".7" stroke-width="0.6"/>
<rect x="312.2" y="431.60" width="9.8" height="7.90" fill="#f0cc20" stroke="#000" stroke-opacity=".7" stroke-width="0.6"/>
<rect x="326.3" y="436.87" width="9.8" height="2.63" fill="#d060a8" stroke="#000" stroke-opacity=".7" stroke-width="0.6"/>
<rect x="340.4" y="435.99" width="9.8" height="3.51" fill="#1890b8" stroke="#000" stroke-opacity=".7" stroke-width="0.6"/>
<rect x="354.5" y="434.24" width="9.8" height="5.26" fill="#ff0000" stroke="#000" stroke-opacity=".7" stroke-width="0.6"/>
<rect x="368.6" y="434.24" width="9.8" height="5.26" fill="#00ff00" stroke="#000" stroke-opacity=".7" stroke-width="0.6"/>
<rect x="382.7" y="437.75" width="9.8" height="1.76" fill="#0000e0" stroke="#000" stroke-opacity=".7" stroke-width="0.6"/>
<rect x="396.8" y="432.92" width="9.8" height="6.58" fill="#00ffff" stroke="#000" stroke-opacity=".7" stroke-width="0.6"/>
<rect x="410.9" y="436.87" width="9.8" height="2.63" fill="#ff00ff" stroke="#000" stroke-opacity=".7" stroke-width="0.6"/>
<rect x="425.0" y="434.67" width="9.8" height="4.83" fill="#ffff00" stroke="#000" stroke-opacity=".7" stroke-width="0.6"/>
<path d="M71.2 297.8h4.2l-2.1 2.5z" fill="#000"/>
<rect x="465.50" y="101.50" width="326.30" height="327.50" fill="#232323"/>
<g clip-path="url(#cf)"><g filter="url(#vb)" shape-rendering="crispEdges"><rect x="480.0" y="103.50" width="33.5" height="6.60" fill="url(#c0)"/><rect x="474.5" y="109.50" width="56.5" height="2.60" fill="url(#c1)"/><rect x="472.0" y="111.50" width="73.5" height="2.60" fill="url(#c2)"/><rect x="470.0" y="113.50" width="89.5" height="2.60" fill="url(#c3)"/><rect x="469.0" y="115.50" width="104.0" height="2.60" fill="url(#c4)"/><rect x="468.0" y="117.50" width="118.5" height="2.60" fill="url(#c5)"/><rect x="467.0" y="119.50" width="132.5" height="2.60" fill="url(#c6)"/><rect x="466.5" y="121.50" width="146.5" height="2.60" fill="url(#c7)"/><rect x="466.0" y="123.50" width="160.0" height="2.60" fill="url(#c8)"/><rect x="466.0" y="125.50" width="173.5" height="2.60" fill="url(#c9)"/><rect x="465.5" y="127.50" width="187.5" height="2.60" fill="url(#c10)"/><rect x="465.5" y="129.50" width="200.5" height="2.60" fill="url(#c11)"/><rect x="465.5" y="131.50" width="214.0" height="2.60" fill="url(#c12)"/><rect x="465.5" y="133.50" width="227.5" height="2.60" fill="url(#c13)"/><rect x="465.5" y="135.50" width="240.5" height="2.60" fill="url(#c14)"/><rect x="465.5" y="137.50" width="254.0" height="2.60" fill="url(#c15)"/><rect x="465.5" y="139.50" width="267.5" height="2.60" fill="url(#c16)"/><rect x="466.0" y="141.50" width="280.0" height="2.60" fill="url(#c17)"/><rect x="466.0" y="143.50" width="293.5" height="2.60" fill="url(#c18)"/><rect x="466.0" y="145.50" width="306.5" height="2.60" fill="url(#c19)"/><rect x="466.5" y="147.50" width="319.5" height="2.60" fill="url(#c20)"/><rect x="466.5" y="149.50" width="325.3" height="2.60" fill="url(#c21)"/><rect x="467.0" y="151.50" width="324.8" height="2.60" fill="url(#c22)"/><rect x="467.5" y="153.50" width="324.3" height="2.60" fill="url(#c23)"/><rect x="467.5" y="155.50" width="324.3" height="2.60" fill="url(#c24)"/><rect x="468.0" y="157.50" width="323.8" height="2.60" fill="url(#c25)"/><rect x="468.5" y="159.50" width="323.3" height="2.60" fill="url(#c26)"/><rect x="469.0" y="161.50" width="322.8" height="2.60" fill="url(#c27)"/><rect x="469.0" y="163.50" width="322.8" height="2.60" fill="url(#c28)"/><rect x="469.5" y="165.50" width="322.3" height="2.60" fill="url(#c29)"/><rect x="470.0" y="167.50" width="321.8" height="2.60" fill="url(#c30)"/><rect x="470.5" y="169.50" width="321.3" height="2.60" fill="url(#c31)"/><rect x="471.0" y="171.50" width="320.0" height="2.60" fill="url(#c32)"/><rect x="471.5" y="173.50" width="318.0" height="2.60" fill="url(#c33)"/><rect x="472.0" y="175.50" width="316.0" height="2.60" fill="url(#c34)"/><rect x="472.5" y="177.50" width="314.0" height="2.60" fill="url(#c35)"/><rect x="473.0" y="179.50" width="312.0" height="2.60" fill="url(#c36)"/><rect x="473.5" y="181.50" width="310.0" height="2.60" fill="url(#c37)"/><rect x="474.0" y="183.50" width="308.0" height="2.60" fill="url(#c38)"/><rect x="474.5" y="185.50" width="306.0" height="2.60" fill="url(#c39)"/><rect x="475.0" y="187.50" width="304.0" height="2.60" fill="url(#c40)"/><rect x="475.5" y="189.50" width="302.0" height="2.60" fill="url(#c41)"/><rect x="476.5" y="191.50" width="299.5" height="2.60" fill="url(#c42)"/><rect x="477.0" y="193.50" width="297.5" height="2.60" fill="url(#c43)"/><rect x="477.5" y="195.50" width="295.5" height="2.60" fill="url(#c44)"/><rect x="478.0" y="197.50" width="293.5" height="2.60" fill="url(#c45)"/><rect x="478.5" y="199.50" width="291.5" height="2.60" fill="url(#c46)"/><rect x="479.5" y="201.50" width="289.0" height="2.60" fill="url(#c47)"/><rect x="480.0" y="203.50" width="287.0" height="2.60" fill="url(#c48)"/><rect x="480.5" y="205.50" width="285.0" height="2.60" fill="url(#c49)"/><rect x="481.0" y="207.50" width="283.0" height="2.60" fill="url(#c50)"/><rect x="481.5" y="209.50" width="281.0" height="2.60" fill="url(#c51)"/><rect x="482.5" y="211.50" width="278.5" height="2.60" fill="url(#c52)"/><rect x="483.0" y="213.50" width="276.5" height="2.60" fill="url(#c53)"/><rect x="483.5" y="215.50" width="274.5" height="2.60" fill="url(#c54)"/><rect x="484.5" y="217.50" width="272.0" height="2.60" fill="url(#c55)"/><rect x="485.0" y="219.50" width="270.0" height="2.60" fill="url(#c56)"/><rect x="485.5" y="221.50" width="268.0" height="2.60" fill="url(#c57)"/><rect x="486.5" y="223.50" width="265.5" height="2.60" fill="url(#c58)"/><rect x="487.0" y="225.50" width="263.5" height="2.60" fill="url(#c59)"/><rect x="488.0" y="227.50" width="261.0" height="2.60" fill="url(#c60)"/><rect x="488.5" y="229.50" width="259.0" height="2.60" fill="url(#c61)"/><rect x="489.0" y="231.50" width="257.0" height="2.60" fill="url(#c62)"/><rect x="490.0" y="233.50" width="254.5" height="2.60" fill="url(#c63)"/><rect x="490.5" y="235.50" width="252.5" height="2.60" fill="url(#c64)"/><rect x="491.5" y="237.50" width="250.0" height="2.60" fill="url(#c65)"/><rect x="492.0" y="239.50" width="248.0" height="2.60" fill="url(#c66)"/><rect x="493.0" y="241.50" width="245.5" height="2.60" fill="url(#c67)"/><rect x="493.5" y="243.50" width="243.5" height="2.60" fill="url(#c68)"/><rect x="494.5" y="245.50" width="241.0" height="2.60" fill="url(#c69)"/><rect x="495.5" y="247.50" width="238.5" height="2.60" fill="url(#c70)"/><rect x="496.0" y="249.50" width="236.5" height="2.60" fill="url(#c71)"/><rect x="497.0" y="251.50" width="234.0" height="2.60" fill="url(#c72)"/><rect x="498.0" y="253.50" width="232.0" height="2.60" fill="url(#c73)"/><rect x="498.5" y="255.50" width="230.0" height="2.60" fill="url(#c74)"/><rect x="499.5" y="257.50" width="227.5" height="2.60" fill="url(#c75)"/><rect x="500.5" y="259.50" width="225.0" height="2.60" fill="url(#c76)"/><rect x="501.0" y="261.50" width="223.0" height="2.60" fill="url(#c77)"/><rect x="502.0" y="263.50" width="220.5" height="2.60" fill="url(#c78)"/><rect x="503.0" y="265.50" width="218.0" height="2.60" fill="url(#c79)"/><rect x="503.5" y="267.50" width="216.0" height="2.60" fill="url(#c80)"/><rect x="504.5" y="269.50" width="213.5" height="2.60" fill="url(#c81)"/><rect x="505.5" y="271.50" width="211.0" height="2.60" fill="url(#c82)"/><rect x="506.5" y="273.50" width="208.5" height="2.60" fill="url(#c83)"/><rect x="507.5" y="275.50" width="206.0" height="2.60" fill="url(#c84)"/><rect x="508.0" y="277.50" width="204.0" height="2.60" fill="url(#c85)"/><rect x="509.0" y="279.50" width="201.5" height="2.60" fill="url(#c86)"/><rect x="510.0" y="281.50" width="199.0" height="2.60" fill="url(#c87)"/><rect x="511.0" y="283.50" width="196.5" height="2.60" fill="url(#c88)"/><rect x="512.0" y="285.50" width="194.0" height="2.60" fill="url(#c89)"/><rect x="512.5" y="287.50" width="192.0" height="2.60" fill="url(#c90)"/><rect x="513.5" y="289.50" width="189.5" height="2.60" fill="url(#c91)"/><rect x="514.5" y="291.50" width="187.0" height="2.60" fill="url(#c92)"/><rect x="515.5" y="293.50" width="184.5" height="2.60" fill="url(#c93)"/><rect x="516.5" y="295.50" width="182.0" height="2.60" fill="url(#c94)"/><rect x="517.5" y="297.50" width="179.5" height="2.60" fill="url(#c95)"/><rect x="518.5" y="299.50" width="177.0" height="2.60" fill="url(#c96)"/><rect x="519.5" y="301.50" width="174.5" height="2.60" fill="url(#c97)"/><rect x="520.0" y="303.50" width="172.5" height="2.60" fill="url(#c98)"/><rect x="521.0" y="305.50" width="170.0" height="2.60" fill="url(#c99)"/><rect x="522.0" y="307.50" width="167.5" height="2.60" fill="url(#c100)"/><rect x="523.0" y="309.50" width="165.0" height="2.60" fill="url(#c101)"/><rect x="524.0" y="311.50" width="162.5" height="2.60" fill="url(#c102)"/><rect x="525.0" y="313.50" width="160.0" height="2.60" fill="url(#c103)"/><rect x="526.0" y="315.50" width="157.5" height="2.60" fill="url(#c104)"/><rect x="527.0" y="317.50" width="155.0" height="2.60" fill="url(#c105)"/><rect x="528.0" y="319.50" width="152.5" height="2.60" fill="url(#c106)"/><rect x="529.0" y="321.50" width="150.0" height="2.60" fill="url(#c107)"/><rect x="530.5" y="323.50" width="147.0" height="2.60" fill="url(#c108)"/><rect x="531.5" y="325.50" width="144.5" height="2.60" fill="url(#c109)"/><rect x="532.5" y="327.50" width="142.0" height="2.60" fill="url(#c110)"/><rect x="533.5" y="329.50" width="139.5" height="2.60" fill="url(#c111)"/><rect x="534.5" y="331.50" width="137.0" height="2.60" fill="url(#c112)"/><rect x="535.5" y="333.50" width="134.5" height="2.60" fill="url(#c113)"/><rect x="536.5" y="335.50" width="132.0" height="2.60" fill="url(#c114)"/><rect x="538.0" y="337.50" width="129.0" height="2.60" fill="url(#c115)"/><rect x="539.0" y="339.50" width="126.5" height="2.60" fill="url(#c116)"/><rect x="540.0" y="341.50" width="124.0" height="2.60" fill="url(#c117)"/><rect x="541.5" y="343.50" width="121.0" height="2.60" fill="url(#c118)"/><rect x="542.5" y="345.50" width="118.5" height="2.60" fill="url(#c119)"/><rect x="543.5" y="347.50" width="116.5" height="2.60" fill="url(#c120)"/><rect x="545.0" y="349.50" width="113.5" height="2.60" fill="url(#c121)"/><rect x="546.0" y="351.50" width="111.0" height="2.60" fill="url(#c122)"/><rect x="547.5" y="353.50" width="108.0" height="2.60" fill="url(#c123)"/><rect x="548.5" y="355.50" width="105.5" height="2.60" fill="url(#c124)"/><rect x="550.0" y="357.50" width="102.5" height="2.60" fill="url(#c125)"/><rect x="551.0" y="359.50" width="100.0" height="2.60" fill="url(#c126)"/><rect x="552.5" y="361.50" width="97.0" height="2.60" fill="url(#c127)"/><rect x="553.5" y="363.50" width="94.5" height="2.60" fill="url(#c128)"/><rect x="555.0" y="365.50" width="91.5" height="2.60" fill="url(#c129)"/><rect x="556.5" y="367.50" width="88.5" height="2.60" fill="url(#c130)"/><rect x="557.5" y="369.50" width="86.0" height="2.60" fill="url(#c131)"/><rect x="559.0" y="371.50" width="83.0" height="2.60" fill="url(#c132)"/><rect x="560.5" y="373.50" width="80.0" height="2.60" fill="url(#c133)"/><rect x="562.0" y="375.50" width="77.0" height="2.60" fill="url(#c134)"/><rect x="563.5" y="377.50" width="74.0" height="2.60" fill="url(#c135)"/><rect x="565.0" y="379.50" width="71.0" height="2.60" fill="url(#c136)"/><rect x="567.0" y="381.50" width="67.5" height="2.60" fill="url(#c137)"/><rect x="568.5" y="383.50" width="64.5" height="2.60" fill="url(#c138)"/><rect x="570.0" y="385.50" width="61.5" height="2.60" fill="url(#c139)"/><rect x="572.0" y="387.50" width="58.0" height="2.60" fill="url(#c140)"/><rect x="573.5" y="389.50" width="55.0" height="2.60" fill="url(#c141)"/><rect x="575.5" y="391.50" width="51.5" height="2.60" fill="url(#c142)"/><rect x="577.0" y="393.50" width="48.5" height="2.60" fill="url(#c143)"/><rect x="579.0" y="395.50" width="45.0" height="2.60" fill="url(#c144)"/><rect x="581.0" y="397.50" width="41.5" height="2.60" fill="url(#c145)"/><rect x="582.5" y="399.50" width="38.5" height="2.60" fill="url(#c146)"/><rect x="584.5" y="401.50" width="35.0" height="2.60" fill="url(#c147)"/><rect x="586.5" y="403.50" width="31.5" height="2.60" fill="url(#c148)"/><rect x="588.5" y="405.50" width="28.0" height="2.60" fill="url(#c149)"/><rect x="590.0" y="407.50" width="25.0" height="2.60" fill="url(#c150)"/><rect x="592.0" y="409.50" width="21.5" height="2.60" fill="url(#c151)"/><rect x="594.0" y="411.50" width="18.0" height="2.60" fill="url(#c152)"/><rect x="595.5" y="413.50" width="15.0" height="2.60" fill="url(#c153)"/><rect x="597.5" y="415.50" width="11.5" height="2.60" fill="url(#c154)"/><rect x="599.5" y="417.50" width="8.0" height="2.60" fill="url(#c155)"/><rect x="601.5" y="419.50" width="4.5" height="6.60" fill="url(#c156)"/></g>
<path d="M605.1 419.9L605.1 419.9L605.0 419.9L605.0 419.9L605.0 419.9L605.0 419.9L605.0 420.0L604.9 420.0L604.9 420.1L604.9 420.1L604.9 420.1L604.8 420.1L604.8 420.1L604.8 420.1L604.7 420.1L604.7 420.1L604.6 420.1L604.6 420.2L604.6 420.2L604.5 420.3L604.5 420.3L604.4 420.3L604.4 420.3L604.3 420.3L604.3 420.3L604.2 420.3L604.1 420.3L604.1 420.3L604.0 420.3L603.9 420.3L603.8 420.3L603.8 420.3L603.7 420.3L603.6 420.3L603.5 420.3L603.4 420.3L603.3 420.3L603.1 420.2L603.0 420.1L602.8 419.9L602.6 419.8L602.3 419.6L602.1 419.4L601.8 419.1L601.5 418.8L601.2 418.6L600.8 418.2L600.5 417.9L600.1 417.5L599.7 417.1L599.3 416.6L598.8 416.1L598.3 415.6L597.7 415.0L597.1 414.4L596.5 413.7L595.9 413.0L595.2 412.3L594.5 411.5L593.8 410.7L593.1 409.9L592.3 409.0L591.4 408.1L590.6 407.2L589.7 406.2L588.7 405.1L587.6 404.0L586.5 402.8L585.4 401.6L584.2 400.3L582.9 399.0L581.6 397.6L580.3 396.2L579.0 394.7L577.5 393.1L576.0 391.4L574.4 389.6L572.8 387.7L571.1 385.7L569.3 383.6L567.5 381.4L565.7 379.1L563.7 376.7L561.7 374.0L559.6 371.1L557.3 367.9L554.9 364.3L552.3 360.3L549.6 356.1L546.8 351.4L543.8 346.5L540.8 341.3L537.6 335.8L534.4 330.0L531.2 323.8L527.8 317.4L524.4 310.6L521.0 303.5L517.5 296.2L514.0 288.7L510.5 281.1L507.0 273.3L503.6 265.5L500.2 257.6L497.0 249.7L493.8 241.8L490.9 234.0L488.1 226.3L485.5 218.7L483.1 211.3L480.8 204.1L478.7 197.2L476.8 190.5L475.0 184.2L473.4 178.1L472.0 172.4L470.7 167.0L469.7 162.0L468.7 157.2L468.0 152.9L467.4 148.8L466.9 145.0L466.6 141.4L466.4 138.2L466.3 135.1L466.3 132.3L466.4 129.7L466.7 127.3L467.0 125.0L467.5 122.9L468.0 121.0L468.7 119.3L469.4 117.7L470.3 116.3L471.2 115.0L472.2 113.9L473.2 112.9L474.4 112.0L475.5 111.3L476.8 110.7L478.1 110.2L479.4 109.8L480.8 109.5L482.2 109.2L483.6 109.0L485.1 108.8L486.6 108.7L488.1 108.6L489.6 108.6L491.2 108.5L492.7 108.5L494.3 108.5L495.8 108.5L497.3 108.5L498.9 108.6L500.5 108.6L502.0 108.7L503.6 108.8L505.3 108.9L506.9 109.0L508.6 109.1L510.2 109.3L512.0 109.4L513.7 109.6L515.5 109.8L517.3 110.0L519.1 110.2L521.0 110.4L522.9 110.6L524.8 110.8L526.8 111.1L528.8 111.3L530.8 111.6L532.9 111.9L535.0 112.2L537.2 112.4L539.4 112.8L541.6 113.1L544.0 113.4L546.3 113.7L548.7 114.1L551.2 114.4L553.7 114.8L556.2 115.2L558.8 115.5L561.5 115.9L564.2 116.3L567.0 116.7L569.8 117.2L572.7 117.6L575.6 118.0L578.6 118.5L581.7 118.9L584.8 119.4L587.9 119.9L591.1 120.3L594.4 120.8L597.7 121.3L601.1 121.8L604.6 122.4L608.1 122.9L611.6 123.4L615.2 124.0L618.9 124.5L622.6 125.1L626.4 125.6L630.1 126.2L634.0 126.8L637.8 127.4L641.7 127.9L645.7 128.5L649.7 129.1L653.6 129.7L657.6 130.3L661.6 130.9L665.5 131.5L669.4 132.1L673.3 132.7L677.1 133.3L681.0 133.8L684.8 134.4L688.6 135.0L692.4 135.6L696.2 136.1L699.9 136.7L703.5 137.2L707.1 137.8L710.6 138.3L713.9 138.8L717.3 139.3L720.5 139.8L723.7 140.2L726.7 140.7L729.7 141.1L732.7 141.6L735.5 142.0L738.2 142.4L740.9 142.8L743.4 143.2L745.9 143.6L748.3 143.9L750.6 144.3L752.8 144.6L754.9 144.9L757.0 145.2L758.9 145.5L760.9 145.8L762.7 146.1L764.5 146.4L766.3 146.6L768.0 146.9L769.6 147.1L771.2 147.4L772.8 147.6L774.3 147.8L775.8 148.1L777.2 148.3L778.6 148.5L779.9 148.7L781.2 148.9L782.4 149.1L783.5 149.2L784.7 149.4L785.7 149.6L786.8 149.7L787.7 149.9L788.6 150.0L789.5 150.1L790.3 150.2L791.1 150.4L791.9 150.5L792.6 150.6L793.3 150.7L793.9 150.8L794.5 150.9L795.1 151.0L795.7 151.0L796.2 151.1L796.7 151.2L797.1 151.3L797.5 151.3L797.9 151.4L798.2 151.4L798.5 151.5L798.8 151.5L799.1 151.6L799.4 151.6L799.6 151.6L799.9 151.7L800.1 151.7L800.4 151.8L800.6 151.8L800.8 151.8L801.0 151.9L801.2 151.9L801.4 151.9L801.6 151.9L801.8 152.0L802.0 152.0L802.2 152.0L802.4 152.1L802.6 152.1L802.8 152.1L803.0 152.2L803.1 152.2L803.3 152.2L803.4 152.2L803.6 152.2L803.7 152.3L803.8 152.3L803.9 152.3L804.0 152.3L804.0 152.3L804.1 152.3L804.1 152.3L804.2 152.3L804.2 152.3L804.2 152.3L804.3 152.3L804.3 152.4L804.3 152.4Z M710.5 143.4L533.4 121.8L560.9 342.8Z" fill="#000" fill-opacity="0.37" fill-rule="evenodd"/>
<path d="M440 80H830V450H440Z M605.1 419.9L605.1 419.9L605.0 419.9L605.0 419.9L605.0 419.9L605.0 419.9L605.0 420.0L604.9 420.0L604.9 420.1L604.9 420.1L604.9 420.1L604.8 420.1L604.8 420.1L604.8 420.1L604.7 420.1L604.7 420.1L604.6 420.1L604.6 420.2L604.6 420.2L604.5 420.3L604.5 420.3L604.4 420.3L604.4 420.3L604.3 420.3L604.3 420.3L604.2 420.3L604.1 420.3L604.1 420.3L604.0 420.3L603.9 420.3L603.8 420.3L603.8 420.3L603.7 420.3L603.6 420.3L603.5 420.3L603.4 420.3L603.3 420.3L603.1 420.2L603.0 420.1L602.8 419.9L602.6 419.8L602.3 419.6L602.1 419.4L601.8 419.1L601.5 418.8L601.2 418.6L600.8 418.2L600.5 417.9L600.1 417.5L599.7 417.1L599.3 416.6L598.8 416.1L598.3 415.6L597.7 415.0L597.1 414.4L596.5 413.7L595.9 413.0L595.2 412.3L594.5 411.5L593.8 410.7L593.1 409.9L592.3 409.0L591.4 408.1L590.6 407.2L589.7 406.2L588.7 405.1L587.6 404.0L586.5 402.8L585.4 401.6L584.2 400.3L582.9 399.0L581.6 397.6L580.3 396.2L579.0 394.7L577.5 393.1L576.0 391.4L574.4 389.6L572.8 387.7L571.1 385.7L569.3 383.6L567.5 381.4L565.7 379.1L563.7 376.7L561.7 374.0L559.6 371.1L557.3 367.9L554.9 364.3L552.3 360.3L549.6 356.1L546.8 351.4L543.8 346.5L540.8 341.3L537.6 335.8L534.4 330.0L531.2 323.8L527.8 317.4L524.4 310.6L521.0 303.5L517.5 296.2L514.0 288.7L510.5 281.1L507.0 273.3L503.6 265.5L500.2 257.6L497.0 249.7L493.8 241.8L490.9 234.0L488.1 226.3L485.5 218.7L483.1 211.3L480.8 204.1L478.7 197.2L476.8 190.5L475.0 184.2L473.4 178.1L472.0 172.4L470.7 167.0L469.7 162.0L468.7 157.2L468.0 152.9L467.4 148.8L466.9 145.0L466.6 141.4L466.4 138.2L466.3 135.1L466.3 132.3L466.4 129.7L466.7 127.3L467.0 125.0L467.5 122.9L468.0 121.0L468.7 119.3L469.4 117.7L470.3 116.3L471.2 115.0L472.2 113.9L473.2 112.9L474.4 112.0L475.5 111.3L476.8 110.7L478.1 110.2L479.4 109.8L480.8 109.5L482.2 109.2L483.6 109.0L485.1 108.8L486.6 108.7L488.1 108.6L489.6 108.6L491.2 108.5L492.7 108.5L494.3 108.5L495.8 108.5L497.3 108.5L498.9 108.6L500.5 108.6L502.0 108.7L503.6 108.8L505.3 108.9L506.9 109.0L508.6 109.1L510.2 109.3L512.0 109.4L513.7 109.6L515.5 109.8L517.3 110.0L519.1 110.2L521.0 110.4L522.9 110.6L524.8 110.8L526.8 111.1L528.8 111.3L530.8 111.6L532.9 111.9L535.0 112.2L537.2 112.4L539.4 112.8L541.6 113.1L544.0 113.4L546.3 113.7L548.7 114.1L551.2 114.4L553.7 114.8L556.2 115.2L558.8 115.5L561.5 115.9L564.2 116.3L567.0 116.7L569.8 117.2L572.7 117.6L575.6 118.0L578.6 118.5L581.7 118.9L584.8 119.4L587.9 119.9L591.1 120.3L594.4 120.8L597.7 121.3L601.1 121.8L604.6 122.4L608.1 122.9L611.6 123.4L615.2 124.0L618.9 124.5L622.6 125.1L626.4 125.6L630.1 126.2L634.0 126.8L637.8 127.4L641.7 127.9L645.7 128.5L649.7 129.1L653.6 129.7L657.6 130.3L661.6 130.9L665.5 131.5L669.4 132.1L673.3 132.7L677.1 133.3L681.0 133.8L684.8 134.4L688.6 135.0L692.4 135.6L696.2 136.1L699.9 136.7L703.5 137.2L707.1 137.8L710.6 138.3L713.9 138.8L717.3 139.3L720.5 139.8L723.7 140.2L726.7 140.7L729.7 141.1L732.7 141.6L735.5 142.0L738.2 142.4L740.9 142.8L743.4 143.2L745.9 143.6L748.3 143.9L750.6 144.3L752.8 144.6L754.9 144.9L757.0 145.2L758.9 145.5L760.9 145.8L762.7 146.1L764.5 146.4L766.3 146.6L768.0 146.9L769.6 147.1L771.2 147.4L772.8 147.6L774.3 147.8L775.8 148.1L777.2 148.3L778.6 148.5L779.9 148.7L781.2 148.9L782.4 149.1L783.5 149.2L784.7 149.4L785.7 149.6L786.8 149.7L787.7 149.9L788.6 150.0L789.5 150.1L790.3 150.2L791.1 150.4L791.9 150.5L792.6 150.6L793.3 150.7L793.9 150.8L794.5 150.9L795.1 151.0L795.7 151.0L796.2 151.1L796.7 151.2L797.1 151.3L797.5 151.3L797.9 151.4L798.2 151.4L798.5 151.5L798.8 151.5L799.1 151.6L799.4 151.6L799.6 151.6L799.9 151.7L800.1 151.7L800.4 151.8L800.6 151.8L800.8 151.8L801.0 151.9L801.2 151.9L801.4 151.9L801.6 151.9L801.8 152.0L802.0 152.0L802.2 152.0L802.4 152.1L802.6 152.1L802.8 152.1L803.0 152.2L803.1 152.2L803.3 152.2L803.4 152.2L803.6 152.2L803.7 152.3L803.8 152.3L803.9 152.3L804.0 152.3L804.0 152.3L804.1 152.3L804.1 152.3L804.2 152.3L804.2 152.3L804.2 152.3L804.3 152.3L804.3 152.4L804.3 152.4Z" fill="#232323" fill-rule="evenodd"/></g>
<rect x="465.50" y="101.50" width="326.30" height="327.50" fill="none" stroke="#8c8c8c" stroke-width="0.9"/>
<path d="M462.50 429.30H465.50" stroke="#8c8c8c" stroke-width="0.9"/>
<path d="M465.50 429.00V431.20" stroke="#8c8c8c" stroke-width="0.9"/>
<path d="M462.50 401.99H465.50" stroke="#8c8c8c" stroke-width="0.9"/>
<path d="M492.68 429.00V431.20" stroke="#8c8c8c" stroke-width="0.9"/>
<path d="M462.50 374.68H465.50" stroke="#8c8c8c" stroke-width="0.9"/>
<path d="M519.85 429.00V431.20" stroke="#8c8c8c" stroke-width="0.9"/>
<path d="M462.50 347.37H465.50" stroke="#8c8c8c" stroke-width="0.9"/>
<path d="M547.02 429.00V431.20" stroke="#8c8c8c" stroke-width="0.9"/>
<path d="M462.50 320.06H465.50" stroke="#8c8c8c" stroke-width="0.9"/>
<path d="M574.20 429.00V431.20" stroke="#8c8c8c" stroke-width="0.9"/>
<path d="M462.50 292.75H465.50" stroke="#8c8c8c" stroke-width="0.9"/>
<path d="M601.38 429.00V431.20" stroke="#8c8c8c" stroke-width="0.9"/>
<path d="M462.50 265.44H465.50" stroke="#8c8c8c" stroke-width="0.9"/>
<path d="M628.55 429.00V431.20" stroke="#8c8c8c" stroke-width="0.9"/>
<path d="M462.50 238.13H465.50" stroke="#8c8c8c" stroke-width="0.9"/>
<path d="M655.73 429.00V431.20" stroke="#8c8c8c" stroke-width="0.9"/>
<path d="M462.50 210.82H465.50" stroke="#8c8c8c" stroke-width="0.9"/>
<path d="M682.90 429.00V431.20" stroke="#8c8c8c" stroke-width="0.9"/>
<path d="M462.50 183.51H465.50" stroke="#8c8c8c" stroke-width="0.9"/>
<path d="M710.08 429.00V431.20" stroke="#8c8c8c" stroke-width="0.9"/>
<path d="M462.50 156.20H465.50" stroke="#8c8c8c" stroke-width="0.9"/>
<path d="M737.25 429.00V431.20" stroke="#8c8c8c" stroke-width="0.9"/>
<path d="M462.50 128.89H465.50" stroke="#8c8c8c" stroke-width="0.9"/>
<path d="M764.42 429.00V431.20" stroke="#8c8c8c" stroke-width="0.9"/>
<rect x="529.8" y="118.6" width="6.4" height="6.4" fill="none" stroke="#fff" stroke-opacity="0.72" stroke-width="0.9"/><circle cx="532.5" cy="121.8" r="1.9" fill="#00e000" stroke="#1c1c1c" stroke-opacity="0.85" stroke-width="0.8"/><rect x="541.0" y="133.8" width="6.4" height="6.4" fill="none" stroke="#fff" stroke-opacity="0.72" stroke-width="0.9"/><circle cx="544.3" cy="137.1" r="1.9" fill="#3c8a3c" stroke="#1c1c1c" stroke-opacity="0.85" stroke-width="0.8"/><rect x="561.5" y="128.1" width="6.4" height="6.4" fill="none" stroke="#fff" stroke-opacity="0.72" stroke-width="0.9"/><circle cx="564.7" cy="131.3" r="1.9" fill="#7c9438" stroke="#1c1c1c" stroke-opacity="0.85" stroke-width="0.8"/><rect x="572.8" y="122.8" width="6.4" height="6.4" fill="none" stroke="#fff" stroke-opacity="0.72" stroke-width="0.9"/><circle cx="576.5" cy="126.2" r="1.9" fill="#ffff20" stroke="#1c1c1c" stroke-opacity="0.85" stroke-width="0.8"/><rect x="586.4" y="126.0" width="6.4" height="6.4" fill="none" stroke="#fff" stroke-opacity="0.72" stroke-width="0.9"/><circle cx="589.9" cy="129.4" r="1.9" fill="#c8a820" stroke="#1c1c1c" stroke-opacity="0.85" stroke-width="0.8"/><rect x="602.0" y="130.1" width="6.4" height="6.4" fill="none" stroke="#fff" stroke-opacity="0.72" stroke-width="0.9"/><circle cx="605.6" cy="133.5" r="1.9" fill="#c08828" stroke="#1c1c1c" stroke-opacity="0.85" stroke-width="0.8"/><rect x="624.8" y="133.2" width="6.4" height="6.4" fill="none" stroke="#fff" stroke-opacity="0.72" stroke-width="0.9"/><circle cx="628.4" cy="136.7" r="1.9" fill="#b46c28" stroke="#1c1c1c" stroke-opacity="0.85" stroke-width="0.8"/><rect x="560.8" y="141.8" width="6.4" height="6.4" fill="none" stroke="#fff" stroke-opacity="0.72" stroke-width="0.9"/><circle cx="564.0" cy="145.0" r="1.9" fill="#4a5c38" stroke="#1c1c1c" stroke-opacity="0.85" stroke-width="0.8"/><rect x="587.6" y="157.2" width="6.4" height="6.4" fill="none" stroke="#fff" stroke-opacity="0.72" stroke-width="0.9"/><circle cx="590.8" cy="160.6" r="1.9" fill="#a88070" stroke="#1c1c1c" stroke-opacity="0.85" stroke-width="0.8"/><rect x="596.5" y="152.4" width="6.4" height="6.4" fill="none" stroke="#fff" stroke-opacity="0.72" stroke-width="0.9"/><circle cx="599.9" cy="155.8" r="1.9" fill="#604436" stroke="#1c1c1c" stroke-opacity="0.85" stroke-width="0.8"/><rect x="634.4" y="162.0" width="6.4" height="6.4" fill="none" stroke="#fff" stroke-opacity="0.72" stroke-width="0.9"/><circle cx="637.9" cy="165.6" r="1.9" fill="#a84458" stroke="#1c1c1c" stroke-opacity="0.85" stroke-width="0.8"/><rect x="545.6" y="164.9" width="6.4" height="6.4" fill="none" stroke="#fff" stroke-opacity="0.72" stroke-width="0.9"/><circle cx="548.8" cy="168.1" r="1.9" fill="#58a894" stroke="#1c1c1c" stroke-opacity="0.85" stroke-width="0.8"/><rect x="537.2" y="176.4" width="6.4" height="6.4" fill="none" stroke="#fff" stroke-opacity="0.72" stroke-width="0.9"/><circle cx="540.6" cy="179.6" r="1.9" fill="#20f0f0" stroke="#1c1c1c" stroke-opacity="0.85" stroke-width="0.8"/><rect x="539.6" y="197.5" width="6.4" height="6.4" fill="none" stroke="#fff" stroke-opacity="0.72" stroke-width="0.9"/><circle cx="542.5" cy="201.0" r="1.9" fill="#1878a0" stroke="#1c1c1c" stroke-opacity="0.85" stroke-width="0.8"/><rect x="556.4" y="196.3" width="6.4" height="6.4" fill="none" stroke="#fff" stroke-opacity="0.72" stroke-width="0.9"/><circle cx="559.6" cy="199.7" r="1.9" fill="#506c90" stroke="#1c1c1c" stroke-opacity="0.85" stroke-width="0.8"/><rect x="567.7" y="198.7" width="6.4" height="6.4" fill="none" stroke="#fff" stroke-opacity="0.72" stroke-width="0.9"/><circle cx="570.9" cy="202.1" r="1.9" fill="#7070a4" stroke="#1c1c1c" stroke-opacity="0.85" stroke-width="0.8"/><rect x="618.8" y="193.9" width="6.4" height="6.4" fill="none" stroke="#fff" stroke-opacity="0.72" stroke-width="0.9"/><circle cx="622.2" cy="197.4" r="1.9" fill="#a84c88" stroke="#1c1c1c" stroke-opacity="0.85" stroke-width="0.8"/><rect x="586.4" y="213.1" width="6.4" height="6.4" fill="none" stroke="#fff" stroke-opacity="0.72" stroke-width="0.9"/><circle cx="589.6" cy="216.5" r="1.9" fill="#4c3060" stroke="#1c1c1c" stroke-opacity="0.85" stroke-width="0.8"/><rect x="668.8" y="152.0" width="6.4" height="6.4" fill="none" stroke="#fff" stroke-opacity="0.72" stroke-width="0.9"/><circle cx="671.4" cy="155.4" r="1.9" fill="#a82430" stroke="#1c1c1c" stroke-opacity="0.85" stroke-width="0.8"/><rect x="707.0" y="140.0" width="6.4" height="6.4" fill="none" stroke="#fff" stroke-opacity="0.72" stroke-width="0.9"/><circle cx="711.4" cy="143.6" r="1.9" fill="#f01010" stroke="#1c1c1c" stroke-opacity="0.85" stroke-width="0.8"/><rect x="628.0" y="244.8" width="6.4" height="6.4" fill="none" stroke="#fff" stroke-opacity="0.72" stroke-width="0.9"/><circle cx="631.6" cy="248.0" r="1.9" fill="#e820e8" stroke="#1c1c1c" stroke-opacity="0.85" stroke-width="0.8"/><rect x="557.6" y="234.0" width="6.4" height="6.4" fill="none" stroke="#fff" stroke-opacity="0.72" stroke-width="0.9"/><circle cx="560.8" cy="237.5" r="1.9" fill="#3c4c94" stroke="#1c1c1c" stroke-opacity="0.85" stroke-width="0.8"/><rect x="558.0" y="269.6" width="6.4" height="6.4" fill="none" stroke="#fff" stroke-opacity="0.72" stroke-width="0.9"/><circle cx="561.4" cy="274.0" r="1.9" fill="#283890" stroke="#1c1c1c" stroke-opacity="0.85" stroke-width="0.8"/><rect x="557.5" y="339.4" width="6.4" height="6.4" fill="none" stroke="#fff" stroke-opacity="0.72" stroke-width="0.9"/><circle cx="560.7" cy="342.4" r="1.9" fill="#1818e0" stroke="#1c1c1c" stroke-opacity="0.85" stroke-width="0.8"/><rect x="569.3" y="170.5" width="6" height="6" fill="#f4f4f4" fill-opacity="0.85" stroke="#1a1a1a" stroke-width="1.3"/><circle cx="572.3" cy="173.5" r="1.5" fill="#8a8a8a" stroke="#333" stroke-width="0.6"/><circle cx="538" cy="151.8" r="2.1" fill="#000"/>
<rect x="702.3" y="335.4" width="86.7" height="72.9" fill="#808080"/>
<g clip-path="url(#ci)"><rect x="700" y="330" width="95" height="85" fill="url(#in1)"/><path d="M700 342.6L792 403.3V330H700z" fill="#000" fill-opacity="0.40"/></g>
<rect x="740.6" y="369.4" width="4.6" height="4.6" fill="none" stroke="#fff" stroke-opacity="0.85" stroke-width="0.8"/><circle cx="749.2" cy="370.4" r="1.6" fill="#ffff30" stroke="#222" stroke-width="0.7"/>
<rect x="686.2" y="459.2" width="3.4" height="3.4" rx="0.6" fill="#333"/>
<path d="M707 458.6l3.6 2.3l-3.6 2.3z" fill="#333"/>
<path d="M727.1 458.8v4.2M729.9 458.8v4.2" stroke="#333" stroke-width="1.1"/>
<rect x="746.4" y="459.4" width="5.4" height="3" rx="1.5" fill="none" stroke="#333" stroke-width="0.8"/>
<path d="M692.4 473.2l-1.4 1.5l1.4 1.5M694 473.2l-1.4 1.5l1.4 1.5M786.2 473.2l1.4 1.5l-1.4 1.5M787.8 473.2l1.4 1.5l-1.4 1.5" fill="none" stroke="#555" stroke-width="0.6"/>
<g fill="#fff"><rect x="7.2" y="488" width="3.4" height="3"/><rect x="11.1" y="487.6" width="3.6" height="3.4"/><rect x="7.2" y="491.5" width="3.4" height="3"/><rect x="11.1" y="491.5" width="3.6" height="3.4"/></g>
<circle cx="33.6" cy="489.6" r="2.3" fill="none" stroke="#fff" stroke-width="0.9"/><path d="M31.9 491.4L28.8 494.4" stroke="#fff" stroke-width="1"/>
<circle cx="53.5" cy="491" r="2.9" fill="none" stroke="#fff" stroke-width="1.1"/>
<rect x="72.4" y="488.6" width="5" height="4.8" fill="none" stroke="#fff" stroke-width="0.8"/><path d="M71 488.4v1.4M71 492.2v1.4M78.8 488.4v1.4M78.8 492.2v1.4" stroke="#fff" stroke-width="0.8"/>
<g transform="translate(98,491)"><rect x="-2.3" y="-5.6" width="4.2" height="4.2" transform="rotate(45 -0.2 -3.5)" fill="#f4d41c"/><rect x="-5.8" y="-2.1" width="4.2" height="4.2" transform="rotate(45 -3.7 0)" fill="#2a9fe0"/><rect x="1.2" y="-2.1" width="4.2" height="4.2" transform="rotate(45 3.3 0)" fill="#3cb44a"/><rect x="-2.3" y="1.4" width="4.2" height="4.2" transform="rotate(45 -0.2 3.5)" fill="#ee3a62"/></g>
<rect x="114.8" y="487.4" width="4.4" height="2" fill="#e8b830"/><rect x="114.8" y="488.4" width="10" height="6.6" fill="#f6d350"/><rect x="117.4" y="491.4" width="4.8" height="3.6" fill="#5aa0e0"/>
<circle cx="141.6" cy="491" r="4.4" fill="#1b82d6"/><path d="M137.4 492.2a4.4 4.4 0 0 0 7.8 1.4a3.4 3.4 0 0 1 -5 -3.6z" fill="#3cd070"/><path d="M139.6 491.4a2.2 2.2 0 0 1 4.2 -1l-2 1.8z" fill="#16306a"/>
<rect x="160.4" y="486.8" width="8.4" height="8.6" rx="0.8" fill="#2b7cd3"/><rect x="157.4" y="488.6" width="5.6" height="5.6" rx="0.6" fill="#185abd"/>
<rect x="183" y="486.8" width="8.2" height="8.6" rx="0.8" fill="#28a8ea"/><rect x="180" y="488.6" width="5.6" height="5.6" rx="0.6" fill="#0f6cbd"/>
<ellipse cx="206.6" cy="491.6" rx="4.6" ry="3.4" fill="#d8d8d8" transform="rotate(-20 206.6 491.6)"/><circle cx="205" cy="491" r="0.8" fill="#888"/><circle cx="208" cy="492.6" r="0.8" fill="#999"/><path d="M209 489.4l2.6-3" stroke="#eee" stroke-width="1"/>
<rect x="224.2" y="487.8" width="10.2" height="6.6" fill="#4aa8e8"/><path d="M224.2 487.8l5.1 3.6l5.1-3.6" fill="none" stroke="#bfe2fa" stroke-width="0.7"/>
<path d="M248.2 487l6.2-0.6l0.6 8l-7.6 0.8z" fill="#8ecbf0"/><path d="M249 488.6l4.6-0.4M249 490.4l4.8-0.4M248.8 492.2l5-0.4" stroke="#4a90c8" stroke-width="0.6"/>
<rect x="267.4" y="485.6" width="11" height="10.6" fill="#f4f4f4"/><path d="M269 493.6v-3.4a2 2 0 0 1 2-2h3.8a2 2 0 0 1 2 2v3.4z" fill="#1c1c1c"/>
<path d="M677.4 492.4l2.8-2.8l2.8 2.8" fill="none" stroke="#fff" stroke-width="0.8"/>
<path d="M688.4 493.2a1.8 1.8 0 0 1 0.6-3.4a2.6 2.6 0 0 1 4.8 0.4a1.6 1.6 0 0 1 0.4 3z" fill="#fff"/>
<rect x="698.6" y="488.8" width="6.6" height="4.2" fill="#fff"/><rect x="699.6" y="489.8" width="2" height="2.2" fill="#1b1b1b"/>
<rect x="709.6" y="488.2" width="6.4" height="4.4" fill="none" stroke="#fff" stroke-width="0.8"/><path d="M711 494.2h3.6M714.6 492.8l1.6 1.8" stroke="#fff" stroke-width="0.8"/>
<path d="M720.6 490h1.4l1.8-1.8v5.6l-1.8-1.8h-1.4z" fill="#fff"/><path d="M725 489.2a2.6 2.6 0 0 1 0 3.6M726.2 488a4.2 4.2 0 0 1 0 6" fill="none" stroke="#fff" stroke-width="0.6"/>
<path d="M782.2 487h6.6v5h-3.4l-1.6 1.6v-1.6h-1.6z" fill="#fff"/><circle cx="788.6" cy="494" r="2.3" fill="#1b1b1b" stroke="#fff" stroke-width="0.6"/>
<g><text x="9.20" y="7.00" font-size="5.3" textLength="163.00" lengthAdjust="spacingAndGlyphs" fill="#111" xml:space="preserve">Calman 2020 Calman Ultimate for Business  - AutoCal - Sony BRAVIA</text>
<text x="22.20" y="20.20" font-size="12.2" font-weight="bold" textLength="38.00" lengthAdjust="spacingAndGlyphs" fill="#fff" stroke="#dc2226" stroke-width="0.45">calman</text>
<text x="15.60" y="34.30" font-size="5.9" textLength="21.40" lengthAdjust="spacingAndGlyphs" fill="#f0f0f0">History 1</text>
<text x="560.10" y="31.00" font-size="5.5" textLength="56.30" lengthAdjust="spacingAndGlyphs" fill="#f4f4f4">Klein Instruments K Series</text>
<text x="560.10" y="37.80" font-size="5.5" textLength="43.70" lengthAdjust="spacingAndGlyphs" fill="#f4f4f4">Sony A90J april2021</text>
<text x="635.90" y="31.00" font-size="5.5" textLength="49.00" lengthAdjust="spacingAndGlyphs" fill="#f4f4f4">Murideo 6G Generator</text>
<text x="705.40" y="31.00" font-size="5.5" textLength="26.80" lengthAdjust="spacingAndGlyphs" fill="#f4f4f4">Sony BRAVIA</text>
<text x="705.40" y="37.80" font-size="5.5" textLength="35.70" lengthAdjust="spacingAndGlyphs" fill="#f4f4f4">Custom for Pro 1</text>
<text x="4.40" y="75.00" font-size="20" textLength="112.60" lengthAdjust="spacingAndGlyphs" fill="#f4f4f4" stroke="#303030" stroke-width="0.4">ColorChecker</text>
<text x="18.20" y="93.50" font-size="7.6" textLength="266.80" lengthAdjust="spacingAndGlyphs" fill="#f2f2f2">Press the read series button to measure the monitor's ColorChecker response</text>
<text x="10.50" y="157.20" font-size="6.9" text-anchor="end" textLength="7.37" lengthAdjust="spacingAndGlyphs" fill="#f0f0f0">15</text>
<text x="10.50" y="182.85" font-size="6.9" text-anchor="end" textLength="7.37" lengthAdjust="spacingAndGlyphs" fill="#f0f0f0">10</text>
<text x="10.50" y="208.35" font-size="6.9" text-anchor="end" textLength="3.68" lengthAdjust="spacingAndGlyphs" fill="#f0f0f0">5</text>
<text x="10.50" y="233.95" font-size="6.9" text-anchor="end" textLength="3.68" lengthAdjust="spacingAndGlyphs" fill="#f0f0f0">0</text>
<text x="47.70" y="152.10" font-size="6.9" text-anchor="middle" textLength="19.15" lengthAdjust="spacingAndGlyphs" fill="#f0f0f0">DeltaL</text>
<text x="53.05" y="239.00" font-size="6.9" text-anchor="middle" textLength="37.57" lengthAdjust="spacingAndGlyphs" fill="#f0f0f0">100% Yellow</text>
<text x="115.30" y="157.20" font-size="6.9" text-anchor="end" textLength="7.37" lengthAdjust="spacingAndGlyphs" fill="#f0f0f0">15</text>
<text x="115.30" y="182.85" font-size="6.9" text-anchor="end" textLength="7.37" lengthAdjust="spacingAndGlyphs" fill="#f0f0f0">10</text>
<text x="115.30" y="208.35" font-size="6.9" text-anchor="end" textLength="3.68" lengthAdjust="spacingAndGlyphs" fill="#f0f0f0">5</text>
<text x="115.30" y="233.95" font-size="6.9" text-anchor="end" textLength="3.68" lengthAdjust="spacingAndGlyphs" fill="#f0f0f0">0</text>
<text x="152.50" y="152.10" font-size="6.9" text-anchor="middle" textLength="20.25" lengthAdjust="spacingAndGlyphs" fill="#f0f0f0">DeltaC</text>
<text x="157.80" y="239.00" font-size="6.9" text-anchor="middle" textLength="37.57" lengthAdjust="spacingAndGlyphs" fill="#f0f0f0">100% Yellow</text>
<text x="219.00" y="157.20" font-size="6.9" text-anchor="end" textLength="7.37" lengthAdjust="spacingAndGlyphs" fill="#f0f0f0">15</text>
<text x="219.00" y="182.85" font-size="6.9" text-anchor="end" textLength="7.37" lengthAdjust="spacingAndGlyphs" fill="#f0f0f0">10</text>
<text x="219.00" y="208.35" font-size="6.9" text-anchor="end" textLength="3.68" lengthAdjust="spacingAndGlyphs" fill="#f0f0f0">5</text>
<text x="219.00" y="233.95" font-size="6.9" text-anchor="end" textLength="3.68" lengthAdjust="spacingAndGlyphs" fill="#f0f0f0">0</text>
<text x="256.20" y="152.10" font-size="6.9" text-anchor="middle" textLength="20.25" lengthAdjust="spacingAndGlyphs" fill="#f0f0f0">DeltaH</text>
<text x="261.20" y="239.00" font-size="6.9" text-anchor="middle" textLength="37.57" lengthAdjust="spacingAndGlyphs" fill="#f0f0f0">100% Yellow</text>
<text x="326.30" y="104.85" font-size="6.9" text-anchor="end" textLength="7.37" lengthAdjust="spacingAndGlyphs" fill="#f0f0f0">20</text>
<text x="326.30" y="137.25" font-size="6.9" text-anchor="end" textLength="7.37" lengthAdjust="spacingAndGlyphs" fill="#f0f0f0">10</text>
<text x="326.30" y="169.35" font-size="6.9" text-anchor="end" textLength="3.68" lengthAdjust="spacingAndGlyphs" fill="#f0f0f0">0</text>
<text x="326.30" y="201.45" font-size="6.9" text-anchor="end" textLength="9.57" lengthAdjust="spacingAndGlyphs" fill="#f0f0f0">-10</text>
<text x="326.30" y="233.95" font-size="6.9" text-anchor="end" textLength="9.57" lengthAdjust="spacingAndGlyphs" fill="#f0f0f0">-20</text>
<text x="377.20" y="99.75" font-size="6.9" text-anchor="middle" textLength="40.13" lengthAdjust="spacingAndGlyphs" fill="#f0f0f0">RGB Balance</text>
<text x="383.45" y="239.00" font-size="6.9" text-anchor="middle" textLength="37.57" lengthAdjust="spacingAndGlyphs" fill="#f0f0f0">100% Yellow</text>
<g clip-path="url(#cs1)">
<text x="22.90" y="267.60" font-size="6.4" text-anchor="middle" textLength="15.70" lengthAdjust="spacingAndGlyphs" fill="#fff">White</text>
<text x="55.55" y="267.60" font-size="6.4" text-anchor="middle" textLength="21.85" lengthAdjust="spacingAndGlyphs" fill="#fff">Gray 80</text>
<text x="88.20" y="267.60" font-size="6.4" text-anchor="middle" textLength="21.85" lengthAdjust="spacingAndGlyphs" fill="#fff">Gray 65</text>
<text x="120.85" y="267.60" font-size="6.4" text-anchor="middle" textLength="21.85" lengthAdjust="spacingAndGlyphs" fill="#fff">Gray 50</text>
<text x="153.50" y="267.60" font-size="6.4" text-anchor="middle" textLength="21.85" lengthAdjust="spacingAndGlyphs" fill="#fff">Gray 35</text>
<text x="186.15" y="267.60" font-size="6.4" text-anchor="middle" textLength="15.02" lengthAdjust="spacingAndGlyphs" fill="#fff">Black</text>
<text x="218.80" y="267.60" font-size="6.4" text-anchor="middle" textLength="26.63" lengthAdjust="spacingAndGlyphs" fill="#fff">Dark Skin</text>
<text x="251.45" y="267.60" font-size="6.4" text-anchor="middle" textLength="26.98" lengthAdjust="spacingAndGlyphs" fill="#fff">Light Skin</text>
<text x="284.10" y="267.60" font-size="6.4" text-anchor="middle" textLength="24.25" lengthAdjust="spacingAndGlyphs" fill="#fff">Blue Sky</text>
<text x="316.75" y="267.60" font-size="6.4" text-anchor="middle" textLength="20.15" lengthAdjust="spacingAndGlyphs" fill="#fff">Foliage</text>
<text x="338.70" y="267.60" font-size="6.4" textLength="12.30" lengthAdjust="spacingAndGlyphs" fill="#fff">Blue</text>
<text x="338.70" y="274.20" font-size="6.4" textLength="18.43" lengthAdjust="spacingAndGlyphs" fill="#fff">Flower</text>
<text x="371.35" y="267.60" font-size="6.4" textLength="16.73" lengthAdjust="spacingAndGlyphs" fill="#fff">Bluish</text>
<text x="371.35" y="274.20" font-size="6.4" textLength="17.07" lengthAdjust="spacingAndGlyphs" fill="#fff">Green</text>
<text x="414.70" y="267.60" font-size="6.4" text-anchor="middle" textLength="20.49" lengthAdjust="spacingAndGlyphs" fill="#fff">Orange</text>
<text x="434.65" y="267.60" font-size="6.4" textLength="22.20" lengthAdjust="spacingAndGlyphs" fill="#fff">Purplish</text>
<text x="434.65" y="274.20" font-size="6.4" textLength="12.30" lengthAdjust="spacingAndGlyphs" fill="#fff">Blue</text>
</g>
<g clip-path="url(#cr1)"><text transform="translate(6.3,248.3) rotate(-90)" font-size="6.2" text-anchor="middle" fill="#f4f4f4">Actual</text></g>
<g clip-path="url(#cr2)"><text transform="translate(6.3,258.2) rotate(-90)" font-size="6.2" text-anchor="middle" fill="#f4f4f4">Target</text></g>
<text x="10.50" y="441.95" font-size="6.9" text-anchor="end" textLength="3.68" lengthAdjust="spacingAndGlyphs" fill="#f0f0f0">0</text>
<text x="10.50" y="424.40" font-size="6.9" text-anchor="end" textLength="3.68" lengthAdjust="spacingAndGlyphs" fill="#f0f0f0">2</text>
<text x="10.50" y="406.85" font-size="6.9" text-anchor="end" textLength="3.68" lengthAdjust="spacingAndGlyphs" fill="#f0f0f0">4</text>
<text x="10.50" y="389.30" font-size="6.9" text-anchor="end" textLength="3.68" lengthAdjust="spacingAndGlyphs" fill="#f0f0f0">6</text>
<text x="10.50" y="371.75" font-size="6.9" text-anchor="end" textLength="3.68" lengthAdjust="spacingAndGlyphs" fill="#f0f0f0">8</text>
<text x="10.50" y="354.20" font-size="6.9" text-anchor="end" textLength="7.37" lengthAdjust="spacingAndGlyphs" fill="#f0f0f0">10</text>
<text x="10.50" y="336.65" font-size="6.9" text-anchor="end" textLength="7.37" lengthAdjust="spacingAndGlyphs" fill="#f0f0f0">12</text>
<text x="10.50" y="319.10" font-size="6.9" text-anchor="end" textLength="7.37" lengthAdjust="spacingAndGlyphs" fill="#f0f0f0">14</text>
<text x="220.50" y="305.30" font-size="6.9" text-anchor="middle" textLength="36.46" lengthAdjust="spacingAndGlyphs" fill="#f0f0f0">DeltaE 2000</text>
<text x="294.00" y="306.50" font-size="6.9" textLength="26.00" lengthAdjust="spacingAndGlyphs" fill="#f0f0f0">Avg: 0,6</text>
<text x="437.20" y="306.50" font-size="6.9" text-anchor="end" textLength="27.40" lengthAdjust="spacingAndGlyphs" fill="#f0f0f0">Max: 1,6</text>
<text x="16.20" y="301.60" font-size="7.3" textLength="15.59" lengthAdjust="spacingAndGlyphs" fill="#fff">2000</text>
<text x="620.00" y="98.80" font-size="6.9" text-anchor="middle" textLength="40.20" lengthAdjust="spacingAndGlyphs" fill="#f0f0f0">CIE 1976 u'v'</text>
<text x="462.10" y="431.75" font-size="6.9" text-anchor="end" textLength="3.68" lengthAdjust="spacingAndGlyphs" fill="#f0f0f0">0</text>
<text x="465.50" y="439.10" font-size="6.9" text-anchor="middle" textLength="3.68" lengthAdjust="spacingAndGlyphs" fill="#f0f0f0">0</text>
<text x="462.10" y="404.44" font-size="6.9" text-anchor="end" textLength="12.89" lengthAdjust="spacingAndGlyphs" fill="#f0f0f0">0,05</text>
<text x="492.68" y="439.10" font-size="6.9" text-anchor="middle" textLength="12.89" lengthAdjust="spacingAndGlyphs" fill="#f0f0f0">0,05</text>
<text x="462.10" y="377.13" font-size="6.9" text-anchor="end" textLength="9.21" lengthAdjust="spacingAndGlyphs" fill="#f0f0f0">0,1</text>
<text x="519.85" y="439.10" font-size="6.9" text-anchor="middle" textLength="9.21" lengthAdjust="spacingAndGlyphs" fill="#f0f0f0">0,1</text>
<text x="462.10" y="349.82" font-size="6.9" text-anchor="end" textLength="12.89" lengthAdjust="spacingAndGlyphs" fill="#f0f0f0">0,15</text>
<text x="547.02" y="439.10" font-size="6.9" text-anchor="middle" textLength="12.89" lengthAdjust="spacingAndGlyphs" fill="#f0f0f0">0,15</text>
<text x="462.10" y="322.51" font-size="6.9" text-anchor="end" textLength="9.21" lengthAdjust="spacingAndGlyphs" fill="#f0f0f0">0,2</text>
<text x="574.20" y="439.10" font-size="6.9" text-anchor="middle" textLength="9.21" lengthAdjust="spacingAndGlyphs" fill="#f0f0f0">0,2</text>
<text x="462.10" y="295.20" font-size="6.9" text-anchor="end" textLength="12.89" lengthAdjust="spacingAndGlyphs" fill="#f0f0f0">0,25</text>
<text x="601.38" y="439.10" font-size="6.9" text-anchor="middle" textLength="12.89" lengthAdjust="spacingAndGlyphs" fill="#f0f0f0">0,25</text>
<text x="462.10" y="267.89" font-size="6.9" text-anchor="end" textLength="9.21" lengthAdjust="spacingAndGlyphs" fill="#f0f0f0">0,3</text>
<text x="628.55" y="439.10" font-size="6.9" text-anchor="middle" textLength="9.21" lengthAdjust="spacingAndGlyphs" fill="#f0f0f0">0,3</text>
<text x="462.10" y="240.58" font-size="6.9" text-anchor="end" textLength="12.89" lengthAdjust="spacingAndGlyphs" fill="#f0f0f0">0,35</text>
<text x="655.73" y="439.10" font-size="6.9" text-anchor="middle" textLength="12.89" lengthAdjust="spacingAndGlyphs" fill="#f0f0f0">0,35</text>
<text x="462.10" y="213.27" font-size="6.9" text-anchor="end" textLength="9.21" lengthAdjust="spacingAndGlyphs" fill="#f0f0f0">0,4</text>
<text x="682.90" y="439.10" font-size="6.9" text-anchor="middle" textLength="9.21" lengthAdjust="spacingAndGlyphs" fill="#f0f0f0">0,4</text>
<text x="462.10" y="185.96" font-size="6.9" text-anchor="end" textLength="12.89" lengthAdjust="spacingAndGlyphs" fill="#f0f0f0">0,45</text>
<text x="710.08" y="439.10" font-size="6.9" text-anchor="middle" textLength="12.89" lengthAdjust="spacingAndGlyphs" fill="#f0f0f0">0,45</text>
<text x="462.10" y="158.65" font-size="6.9" text-anchor="end" textLength="9.21" lengthAdjust="spacingAndGlyphs" fill="#f0f0f0">0,5</text>
<text x="737.25" y="439.10" font-size="6.9" text-anchor="middle" textLength="9.21" lengthAdjust="spacingAndGlyphs" fill="#f0f0f0">0,5</text>
<text x="462.10" y="131.34" font-size="6.9" text-anchor="end" textLength="12.89" lengthAdjust="spacingAndGlyphs" fill="#f0f0f0">0,55</text>
<text x="764.42" y="439.10" font-size="6.9" text-anchor="middle" textLength="12.89" lengthAdjust="spacingAndGlyphs" fill="#f0f0f0">0,55</text>
<text x="789.60" y="421.60" font-size="8.5" text-anchor="end" font-weight="bold" textLength="106.80" lengthAdjust="spacingAndGlyphs" fill="#f6f6f6" stroke="#232323" stroke-width="0.3">RGB Triplet: 235, 235, 16</text>
<g clip-path="url(#cs2)">
<text x="12.10" y="474.30" font-size="4.8" text-anchor="middle" fill="#232323">White</text>
<text x="35.30" y="474.30" font-size="4.8" text-anchor="middle" fill="#232323">Gray 80</text>
<text x="58.50" y="474.30" font-size="4.8" text-anchor="middle" fill="#232323">Gray 65</text>
<text x="81.70" y="474.30" font-size="4.8" text-anchor="middle" fill="#232323">Gray 50</text>
<text x="104.90" y="474.30" font-size="4.8" text-anchor="middle" fill="#232323">Gray 35</text>
<text x="128.10" y="474.30" font-size="4.8" text-anchor="middle" fill="#232323">Black</text>
<text x="151.30" y="474.30" font-size="4.8" text-anchor="middle" fill="#232323">Dark Skin</text>
<text x="174.50" y="474.30" font-size="4.8" text-anchor="middle" fill="#232323">Light Skin</text>
<text x="197.70" y="474.30" font-size="4.8" text-anchor="middle" fill="#232323">Blue Sky</text>
<text x="220.90" y="474.30" font-size="4.8" text-anchor="middle" fill="#232323">Foliage</text>
<text x="244.10" y="469.00" font-size="4.8" text-anchor="middle" fill="#232323">Blue</text>
<text x="244.10" y="474.30" font-size="4.8" text-anchor="middle" fill="#232323">Flower</text>
<text x="267.30" y="469.00" font-size="4.8" text-anchor="middle" fill="#232323">Bluish</text>
<text x="267.30" y="474.30" font-size="4.8" text-anchor="middle" fill="#232323">Green</text>
<text x="290.50" y="474.30" font-size="4.8" text-anchor="middle" fill="#232323">Orange</text>
<text x="313.70" y="469.00" font-size="4.8" text-anchor="middle" fill="#232323">Purplish</text>
<text x="313.70" y="474.30" font-size="4.8" text-anchor="middle" fill="#232323">Blue</text>
<text x="336.90" y="469.00" font-size="4.8" text-anchor="middle" fill="#232323">Moderate</text>
<text x="336.90" y="474.30" font-size="4.8" text-anchor="middle" fill="#232323">Red</text>
<text x="360.10" y="474.30" font-size="4.8" text-anchor="middle" fill="#232323">Purple</text>
<text x="383.30" y="469.00" font-size="4.8" text-anchor="middle" fill="#232323">Yellow</text>
<text x="383.30" y="474.30" font-size="4.8" text-anchor="middle" fill="#232323">Green</text>
<text x="406.50" y="469.00" font-size="4.8" text-anchor="middle" fill="#232323">Orange</text>
<text x="406.50" y="474.30" font-size="4.8" text-anchor="middle" fill="#232323">Yellow</text>
<text x="429.70" y="474.30" font-size="4.8" text-anchor="middle" fill="#232323">Blue</text>
<text x="452.90" y="474.30" font-size="4.8" text-anchor="middle" fill="#232323">Green</text>
<text x="476.10" y="474.30" font-size="4.8" text-anchor="middle" fill="#232323">Red</text>
<text x="499.30" y="474.30" font-size="4.8" text-anchor="middle" fill="#232323">Yellow</text>
<text x="522.50" y="474.30" font-size="4.8" text-anchor="middle" fill="#232323">Magenta</text>
<text x="545.70" y="474.30" font-size="4.8" text-anchor="middle" fill="#232323">Cyan</text>
<text x="568.90" y="474.30" font-size="4.8" text-anchor="middle" fill="#232323">100% Red</text>
<text x="592.10" y="469.00" font-size="4.8" text-anchor="middle" fill="#232323">100%</text>
<text x="592.10" y="474.30" font-size="4.8" text-anchor="middle" fill="#232323">Green</text>
<text x="615.30" y="469.00" font-size="4.8" text-anchor="middle" fill="#232323">100%</text>
<text x="615.30" y="474.30" font-size="4.8" text-anchor="middle" fill="#232323">Blue</text>
<text x="638.50" y="469.00" font-size="4.8" text-anchor="middle" fill="#232323">100%</text>
<text x="638.50" y="474.30" font-size="4.8" text-anchor="middle" fill="#232323">Cyan</text>
<text x="661.70" y="469.00" font-size="4.8" text-anchor="middle" fill="#232323">100%</text>
<text x="661.70" y="474.30" font-size="4.8" text-anchor="middle" fill="#232323">Magenta</text>
<text x="684.90" y="469.00" font-size="4.8" text-anchor="middle" fill="#232323">100%</text>
<text x="684.90" y="474.30" font-size="4.8" text-anchor="middle" fill="#232323">Yellow</text>
</g>
<text x="789.80" y="464.00" font-size="8" text-anchor="middle" textLength="12.60" lengthAdjust="spacingAndGlyphs" fill="#fff">123</text>
<text x="703.60" y="478.00" font-size="10.4" textLength="22.60" lengthAdjust="spacingAndGlyphs" fill="#2e2e2e" stroke="#2e2e2e" stroke-width="0.25">Back</text>
<text x="751.00" y="478.00" font-size="10.4" textLength="22.60" lengthAdjust="spacingAndGlyphs" fill="#2e2e2e" stroke="#2e2e2e" stroke-width="0.25">Next</text>
<text x="160.20" y="493.00" font-size="4.4" text-anchor="middle" font-weight="bold" fill="#fff">W</text>
<text x="182.80" y="493.00" font-size="4.4" text-anchor="middle" font-weight="bold" fill="#fff">O</text>
<text x="737.00" y="493.00" font-size="4.8" text-anchor="middle" fill="#fff">NOB</text>
<text x="761.30" y="488.60" font-size="4.8" text-anchor="middle" fill="#fff">16:16</text>
<text x="761.30" y="497.40" font-size="4.8" text-anchor="middle" fill="#fff">18.03.2021</text>
<text x="788.60" y="495.50" font-size="3.8" text-anchor="middle" fill="#fff">1</text></g></svg>
</body></html>
